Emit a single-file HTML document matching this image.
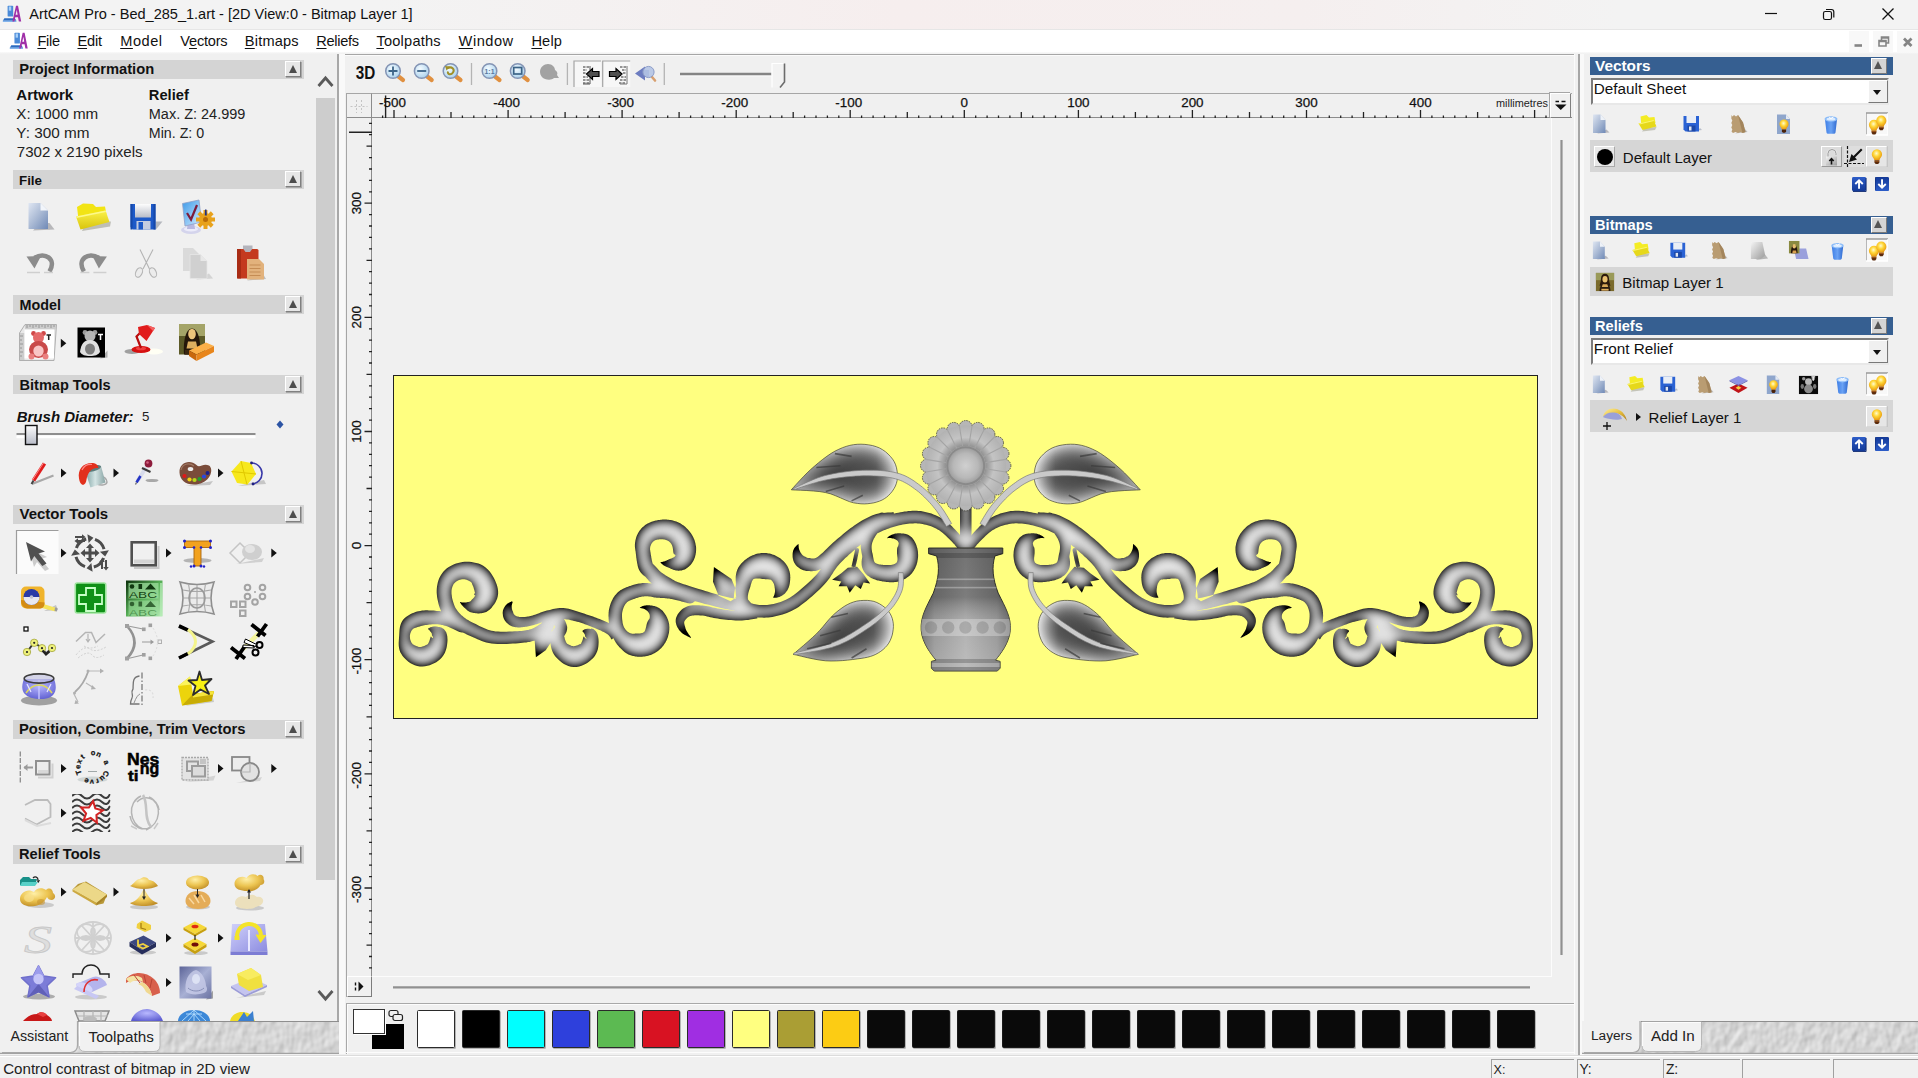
<!DOCTYPE html>
<html><head><meta charset="utf-8"><title>ArtCAM Pro</title>
<style>
html,body{margin:0;padding:0}
body{width:1918px;height:1078px;position:relative;overflow:hidden;background:#f0f0f0;font-family:"Liberation Sans",sans-serif;color:#1a1a1a}
.a{position:absolute}
.t{position:absolute;white-space:nowrap;line-height:1}
.hdr{position:absolute;left:13px;width:291px;height:19px;background:#d4d4d4}
.hdr b{position:absolute;left:5px;top:2px;font-size:15px;line-height:16px;letter-spacing:-0.2px;color:#111;transform-origin:0 50%}
.cb{position:absolute;width:14px;height:14px;background:#e6e6e6;border:1px solid;border-color:#fff #808080 #808080 #fff;box-shadow:1px 1px 0 #a8a8a8}
.cb:after{content:"";position:absolute;left:2.500px;top:2.500px;border:4.500px solid transparent;border-top:0;border-bottom:8.500px solid #4c4c4c}
.rh{position:absolute;left:1590px;width:303px;height:18px;background:#365f91}
.rh b{position:absolute;left:5px;top:1px;font-size:15px;line-height:16px;color:#fff;letter-spacing:-0.2px}
.row{position:absolute;left:1590px;width:303px;background:#d6d6d6}
.ic{position:absolute;width:32px;height:32px}
.arr{position:absolute;width:0;height:0;border:4px solid transparent;border-right:0;border-left:5px solid #111}
</style></head><body>
<svg width="0" height="0" style="position:absolute"><defs>
<linearGradient id="gPage" x1="0" y1="0" x2="1" y2="1"><stop offset="0" stop-color="#dfe6f2"/><stop offset=".5" stop-color="#a9b9d4"/><stop offset="1" stop-color="#6f89b6"/></linearGradient>
<radialGradient id="gBulb" cx=".45" cy=".38" r=".6"><stop offset="0" stop-color="#fffbd0"/><stop offset=".45" stop-color="#ffd83a"/><stop offset="1" stop-color="#e89a10"/></radialGradient>
<linearGradient id="gBin" x1="0" y1="0" x2="1" y2="0"><stop offset="0" stop-color="#3f7fe6"/><stop offset=".5" stop-color="#6aa2f4"/><stop offset="1" stop-color="#2f6ad0"/></linearGradient>
<linearGradient id="gGold" x1="0" y1="0" x2="1" y2="1"><stop offset="0" stop-color="#fff2a0"/><stop offset=".5" stop-color="#e8c040"/><stop offset="1" stop-color="#a87818"/></linearGradient>
<linearGradient id="gGrey" x1="0" y1="0" x2="1" y2="1"><stop offset="0" stop-color="#f4f4f4"/><stop offset="1" stop-color="#9a9a9a"/></linearGradient>
<linearGradient id="gBlueV" x1="0" y1="0" x2="0" y2="1"><stop offset="0" stop-color="#2c5cc8"/><stop offset="1" stop-color="#143a98"/></linearGradient>
<radialGradient id="gLens" cx=".4" cy=".35" r=".7"><stop offset="0" stop-color="#f4fbff"/><stop offset="1" stop-color="#a8d0ec"/></radialGradient>
<symbol id="s-new" viewBox="0 0 22 22"><path d="M7 20.500l12.500-1-3-3z" fill="#a9a9b0" opacity=".8"/><path d="M3 1.500h7.500l5 5.500V20H3z" fill="url(#gPage)"/><path d="M10.500 1.500V7h5z" fill="#eef2f8"/></symbol>
<symbol id="s-open" viewBox="0 0 22 22"><path d="M6 18.500l13-1.500 1.500-3-12 1z" fill="#b0b0a0" opacity=".7"/><path d="M4.500 3.500l6-1.500 2.500 2.500 5.500-.5 1 6-14 3z" fill="#f4ec24"/><path d="M2.500 10.500l15-3.500 3 6.500-14 3.500z" fill="#e6d81a"/><path d="M2.500 10.500l15-3.500.5 1-14.500 3.500z" fill="#fbf66a"/></symbol>
<symbol id="s-save" viewBox="0 0 22 22"><path d="M17 17.500l4-.5-2-2z" fill="#a0a8b8" opacity=".7"/><path d="M2.500 3h15.500v15.500H4.500l-2-2z" fill="#2a62d4"/><rect x="5.500" y="3" width="9.500" height="7" fill="#e9eef6"/><rect x="6.500" y="12.500" width="8" height="6" fill="#1c48a8"/><rect x="8" y="13.500" width="2.500" height="4" fill="#dfe6f2"/></symbol>
<symbol id="s-brown" viewBox="0 0 22 22"><path d="M8 20.500l12.500-1.500-2.500-3z" fill="#a8a8a8" opacity=".7"/><path d="M4.500 2l1 1.500L7 2l2 1.500L11 2l5 7.500 2.500 9.500-3 1-2-1-2.500 1-2.500-1L6 20l-1.500-1.500.8-2-1-2 1-2.500-1-2 1-2.500-1-2z" fill="#b99c72"/><path d="M11 2l5 7.500 2.500 9.500-3 1z" fill="#a3855c"/></symbol>
<symbol id="s-bulb" viewBox="0 0 22 22"><path d="M11 2.500a6 6 0 0 1 6 6c0 2.600-1.800 3.800-2.600 5.500l-.4 1.500H8l-.4-1.500C6.800 12.300 5 11.100 5 8.500a6 6 0 0 1 6-6z" fill="url(#gBulb)"/><path d="M8.200 15.500h5.600v2.500l-1.300 1.800h-3l-1.300-1.800z" fill="#5a2a0c"/><path d="M8.200 16.500h5.600" stroke="#c06a20" stroke-width=".8"/></symbol>
<symbol id="s-bulbdoc" viewBox="0 0 22 22"><path d="M4 1.500h9l4 4.500V21H4z" fill="#8fa6cc"/><path d="M13 1.500V6h4z" fill="#e4eaf4"/><path d="M11 6.500a4.600 4.600 0 0 1 4.600 4.600c0 2-1.400 3-2 4.200l-.3 1.200h-4.600l-.3-1.200c-.6-1.200-2-2.200-2-4.200A4.600 4.600 0 0 1 11 6.500z" fill="url(#gBulb)"/><path d="M8.900 16.500h4.200v2l-1 1.300h-2.200l-1-1.300z" fill="#4a220a"/></symbol>
<symbol id="s-trash" viewBox="0 0 22 22"><path d="M5 6.500h12l-1.500 13a1.500 1.500 0 0 1-1.500 1.200H8a1.500 1.500 0 0 1-1.500-1.200z" fill="url(#gBin)"/><ellipse cx="11" cy="6" rx="6.500" ry="2.800" fill="#8cbcf8"/><ellipse cx="11" cy="6" rx="4.500" ry="1.600" fill="#dcecff"/><path d="M9 4.500l2 1 2.500-1.500" stroke="#fff" stroke-width="1" fill="none"/></symbol>
<symbol id="s-bulbs" viewBox="0 0 24 24"><rect x="0" y="0" width="24" height="24" fill="#f8f8f8"/><path d="M0 24V0h24" fill="none" stroke="#9a9a9a" stroke-width="1.500"/><path d="M24 0v24H0" fill="none" stroke="#fff" stroke-width="1.500"/><g transform="translate(-1.500 5) scale(.85)"><use href="#s-bulb"/></g><g transform="translate(6.500 .5) scale(.85)"><use href="#s-bulb"/></g></symbol>
<symbol id="s-bulbbtn" viewBox="0 0 22 22"><rect x="0" y="0" width="22" height="22" fill="#e6e6e6"/><path d="M0 22V0h22" fill="none" stroke="#fff" stroke-width="2"/><path d="M22 0v22H0" fill="none" stroke="#b0b0b0" stroke-width="1.500"/><g transform="translate(1.500 1) scale(.88)"><use href="#s-bulb"/></g></symbol>
<symbol id="s-mona" viewBox="0 0 22 22"><rect x="1" y="1" width="20" height="20" fill="#7a6a2c"/><path d="M1 1h20v8H1z" fill="#9a9a58"/><path d="M5 21c0-5 2-8 6-8s6 3 6 8z" fill="#2a1c10"/><path d="M6.500 8c0-4 2-6 4.500-6s4.500 2 4.500 6c0 3 1 5 1.500 7h-12c.5-2 1.500-4 1.500-7z" fill="#2c1a0c"/><ellipse cx="11" cy="8" rx="2.800" ry="3.600" fill="#e8c070"/><path d="M8.500 13.500h5l1 3h-7z" fill="#d8a858"/><path d="M7 18.500h8v2H7z" fill="#e0b060"/></symbol>
<symbol id="s-updn" viewBox="0 0 16 16"><rect x="0" y="0" width="15" height="15" rx="1.500" fill="url(#gBlueV)"/><path d="M15 1v14.500H1" stroke="#0c2870" stroke-width="1" fill="none"/><path d="M7.500 12.500V4M3.500 7.500l4-4 4 4" stroke="#fff" stroke-width="2" fill="none"/></symbol>
<symbol id="s-greypage" viewBox="0 0 22 22"><path d="M8 21l13-1.500-3-4z" fill="#a8a8a8" opacity=".8"/><path d="M3 2h12l3 14-4.500 4H3z" fill="url(#gGrey)"/></symbol>
<symbol id="s-monasm" viewBox="0 0 22 22"><path d="M6 9h13l2.500 11h-13z" fill="#9aa0dc"/><rect x="1" y="1" width="11" height="13" fill="#8a8a40"/><path d="M3 14c0-4 1-9 3.500-9S10 10 10 14z" fill="#24140a"/><ellipse cx="6.500" cy="6.500" rx="1.800" ry="2.300" fill="#e8c070"/><path d="M5 11h3.500l.5 3H4.500z" fill="#d8a050"/></symbol>
<symbol id="s-merge" viewBox="0 0 22 22"><path d="M1.500 14.500L11 10l9.500 4.500L11 20z" fill="#c01418"/><path d="M11 12.500l3 2-3 2-3-2z" fill="#f8d040"/><path d="M1.500 6.500L11 2l9.500 4.500L11 11.500z" fill="#8c92e4"/><path d="M1.500 6.500L11 11.500v1L1.500 7.500zM20.500 6.500L11 11.500v1l9.500-5z" fill="#6468b8"/></symbol>
<symbol id="s-xray" viewBox="0 0 22 22"><rect x="1" y="2" width="20" height="19" fill="#0a0a0a"/><circle cx="11" cy="8" r="3.600" fill="#b8b8b8"/><ellipse cx="11" cy="15.500" rx="4.600" ry="4.600" fill="#8a8a8a"/><circle cx="6" cy="5" r="1.800" fill="#9a9a9a"/><circle cx="16" cy="5" r="1.800" fill="#9a9a9a"/><ellipse cx="4.500" cy="13" rx="1.800" ry="2.600" fill="#777"/><ellipse cx="17.500" cy="13" rx="1.800" ry="2.600" fill="#777"/><path d="M14 3h4" stroke="#eee" stroke-width="1.400"/><path d="M16 3v4" stroke="#eee" stroke-width="1.200"/></symbol>
</defs></svg>
<!-- title bar -->
<div class="a" style="left:0;top:0;width:1918px;height:29px;background:linear-gradient(90deg,#f3f3f3 0,#f3f3f3 380px,#f6eeee 900px,#f5efef 1300px,#f3f3f3 1620px)"></div>
<!-- menu bar -->
<div class="a" style="left:0;top:28.500px;width:1918px;height:1px;background:#e6e6e6;z-index:1"></div>
<div class="a" style="left:0;top:29px;width:1918px;height:23px;background:#fff"></div>
<div class="a" style="left:0;top:52px;width:1918px;height:2px;background:linear-gradient(#fafafa,#f0f0f0)"></div>
<!-- window controls -->
<svg class="a" style="left:1740px;top:0" width="178" height="29" viewBox="0 0 178 29">
 <path d="M25 13.5H37" stroke="#111" stroke-width="1.2" fill="none"/>
 <rect x="83.5" y="11.500" width="8" height="8" rx="1.8" fill="none" stroke="#111" stroke-width="1.2"/>
 <path d="M86 9.500h5.500a2.300 2.300 0 0 1 2.300 2.300V17.500" fill="none" stroke="#111" stroke-width="1.200"/>
 <path d="M142.500 8.500L153.500 19.500M153.500 8.500L142.500 19.500" stroke="#111" stroke-width="1.300" fill="none"/>
</svg>
<!-- mdi child controls -->
<div class="a" style="left:1849px;top:31px;width:20px;height:21px;background:#f8f8f8"></div>
<div class="a" style="left:1873px;top:31px;width:20px;height:21px;background:#f8f8f8"></div>
<div class="a" style="left:1897px;top:31px;width:21px;height:21px;background:#f8f8f8"></div>
<svg class="a" style="left:1849px;top:31px" width="69" height="21" viewBox="0 0 69 21">
 <path d="M5.500 14.500h7.500" stroke="#858585" stroke-width="2.600" fill="none"/>
 <path d="M30 9.500h7v5.500h-7zM30 10.500h7M32.500 9V6h7v6H37.500M32.500 7h7" stroke="#858585" stroke-width="1.600" fill="none"/>
 <path d="M55 7.500l7.500 7.500M62.500 7.500l-7.500 7.500" stroke="#858585" stroke-width="2.800" fill="none"/>
</svg>
<!-- status bar -->
<div class="a" style="left:0;top:1055px;width:1918px;height:1px;background:#dcdcdc"></div>
<div class="a" style="left:0;top:1056px;width:1918px;height:1px;background:#fff"></div>
<div class="a" style="left:1491px;top:1059px;width:82px;height:19px;border-left:1px solid #a0a0a0;border-top:1px solid #a0a0a0"></div>
<div class="a" style="left:1577px;top:1059px;width:82px;height:19px;border-left:1px solid #a0a0a0;border-top:1px solid #a0a0a0"></div>
<div class="a" style="left:1663px;top:1059px;width:76px;height:19px;border-left:1px solid #a0a0a0;border-top:1px solid #a0a0a0"></div>
<div class="a" style="left:1742px;top:1059px;width:87px;height:19px;border-left:1px solid #a0a0a0;border-top:1px solid #a0a0a0"></div>
<div class="a" style="left:1833px;top:1059px;width:85px;height:19px;border-left:1px solid #a0a0a0;border-top:1px solid #a0a0a0"></div>
<!-- left panel -->
<div class="hdr" style="top:60px"></div><div class="cb" style="left:285px;top:61px"></div>
<div class="hdr" style="top:170px"></div><div class="cb" style="left:285px;top:171px"></div>
<div class="hdr" style="top:295px"></div><div class="cb" style="left:285px;top:296px"></div>
<div class="hdr" style="top:375px"></div><div class="cb" style="left:285px;top:376px"></div>
<div class="hdr" style="top:505px"></div><div class="cb" style="left:285px;top:506px"></div>
<div class="hdr" style="top:720px"></div><div class="cb" style="left:285px;top:721px"></div>
<div class="hdr" style="top:845px"></div><div class="cb" style="left:285px;top:846px"></div>
<!-- scrollbar -->
<div class="a" style="left:316px;top:98px;width:19px;height:782px;background:#cdcdcd"></div>
<svg class="a" style="left:316px;top:70px" width="20" height="20" viewBox="0 0 20 20"><path d="M2.500 16l7-8 7 8" fill="none" stroke="#5a5a5a" stroke-width="2.800"/></svg>
<svg class="a" style="left:316px;top:985.500px" width="20" height="20" viewBox="0 0 20 20"><path d="M2.500 5l7 8 7-8" fill="none" stroke="#5a5a5a" stroke-width="2.800"/></svg>
<!-- splitter -->
<div class="a" style="left:337.200px;top:54px;width:2px;height:968px;background:#a8a8a8"></div>
<div class="a" style="left:339px;top:54px;width:5.500px;height:1000px;background:#f9f9f9"></div>
<!-- tabs bottom -->
<svg class="a" style="left:0;top:1021px" width="340" height="34" viewBox="0 1021 340 34">
<defs><filter id="fTex" x="0" y="0" width="100%" height="100%" color-interpolation-filters="sRGB"><feTurbulence type="fractalNoise" baseFrequency="0.11 0.08" numOctaves="2" seed="4" result="n"/><feDiffuseLighting in="n" surfaceScale="0.750" diffuseConstant="1" lighting-color="#fff" result="l"><feDistantLight azimuth="225" elevation="58"/></feDiffuseLighting><feColorMatrix in="l" type="matrix" values="1 0 0 0 -0.01  0 1 0 0 -0.01  0 0 1 0 -0.01  0 0 0 0 1"/></filter></defs>
<rect x="0" y="1021" width="339" height="32.500" fill="#d6d6d6"/>
<rect x="0" y="1021" width="339" height="32.500" filter="url(#fTex)"/>
<path d="M78 1021.500H339" stroke="#8e8e8e" stroke-width="1"/>
<path d="M0 1053.300H339" stroke="#a2a2a2" stroke-width="1.200"/>
<path d="M0 1021h77.500v24q0 7-7 7.500H0z" fill="#f0f0f0"/><path d="M77.500 1021v24q0 7-7 7.500H2" fill="none" stroke="#a8a8a8" stroke-width="1.200"/>
<path d="M79 1022h81v23.500q0 6-6 6H85q-6 0-6-6z" fill="#f1f1f1" stroke="#b8b8b8" stroke-width="1"/><path d="M79.500 1046v-23.500h80" fill="none" stroke="#fcfcfc" stroke-width="1.200"/>
</svg>
<div class="a" style="left:345px;top:54px;width:1229px;height:1px;background:#a6a6a6"></div>
<div class="a" style="left:345px;top:55px;width:1229px;height:1px;background:#fbfbfb"></div>
<div class="a" style="left:1574px;top:54px;width:1px;height:1000px;background:#fbfbfb"></div>
<div class="a" style="left:1578px;top:54px;width:2px;height:1001px;background:#a6a6a6"></div>
<div class="a" style="left:1580px;top:54px;width:3.500px;height:1001px;background:#f9f9f9"></div>
<div class="a" style="left:346px;top:93px;width:1226px;height:25px;border:1px solid #a6a6a6;border-right:0;border-bottom-color:#8c8c8c;box-sizing:border-box"></div>
<div class="a" style="left:346px;top:93px;width:26px;height:904px;border:1px solid #a6a6a6;border-right-color:#8c8c8c;box-sizing:border-box"></div>
<div class="a" style="left:1551px;top:118px;width:1px;height:858px;background:#fcfcfc"></div>
<div class="a" style="left:372px;top:976px;width:1180px;height:1px;background:#fcfcfc"></div>
<svg class="a" style="left:0;top:0" width="1918" height="1078" viewBox="0 0 1918 1078">
<path d="M382.6 115.5V118M394.0 110.0V118M405.4 115.5V118M416.8 115.5V118M428.2 115.5V118M439.6 115.5V118M451.0 112.0V118M462.4 115.5V118M473.8 115.5V118M485.2 115.5V118M496.7 115.5V118M508.1 110.0V118M519.5 115.5V118M530.9 115.5V118M542.3 115.5V118M553.7 115.5V118M565.1 112.0V118M576.5 115.5V118M587.9 115.5V118M599.3 115.5V118M610.7 115.5V118M622.1 110.0V118M633.5 115.5V118M644.9 115.5V118M656.3 115.5V118M667.7 115.5V118M679.1 112.0V118M690.6 115.5V118M702.0 115.5V118M713.4 115.5V118M724.8 115.5V118M736.2 110.0V118M747.6 115.5V118M759.0 115.5V118M770.4 115.5V118M781.8 115.5V118M793.2 112.0V118M804.6 115.5V118M816.0 115.5V118M827.4 115.5V118M838.8 115.5V118M850.2 110.0V118M861.6 115.5V118M873.1 115.5V118M884.5 115.5V118M895.9 115.5V118M907.3 112.0V118M918.7 115.5V118M930.1 115.5V118M941.5 115.5V118M952.9 115.5V118M964.3 110.0V118M975.7 115.5V118M987.1 115.5V118M998.5 115.5V118M1009.9 115.5V118M1021.3 112.0V118M1032.7 115.5V118M1044.1 115.5V118M1055.5 115.5V118M1067.0 115.5V118M1078.4 110.0V118M1089.8 115.5V118M1101.2 115.5V118M1112.6 115.5V118M1124.0 115.5V118M1135.4 112.0V118M1146.8 115.5V118M1158.2 115.5V118M1169.6 115.5V118M1181.0 115.5V118M1192.4 110.0V118M1203.8 115.5V118M1215.2 115.5V118M1226.6 115.5V118M1238.0 115.5V118M1249.5 112.0V118M1260.9 115.5V118M1272.3 115.5V118M1283.7 115.5V118M1295.1 115.5V118M1306.5 110.0V118M1317.9 115.5V118M1329.3 115.5V118M1340.7 115.5V118M1352.1 115.5V118M1363.5 112.0V118M1374.9 115.5V118M1386.3 115.5V118M1397.7 115.5V118M1409.1 115.5V118M1420.5 110.0V118M1431.9 115.5V118M1443.4 115.5V118M1454.8 115.5V118M1466.2 115.5V118M1477.6 112.0V118M1489.0 115.5V118M1500.4 115.5V118M1511.8 115.5V118M1523.2 115.5V118M1534.6 110.0V118M1546.0 115.5V118" stroke="#222" stroke-width="1.3" fill="none"/>
<path d="M369.0 967.9H372M369.0 956.5H372M366.5 945.1H372M369.0 933.6H372M369.0 922.2H372M369.0 910.8H372M369.0 899.4H372M364.5 888.0H372M369.0 876.6H372M369.0 865.2H372M369.0 853.8H372M369.0 842.3H372M366.5 830.9H372M369.0 819.5H372M369.0 808.1H372M369.0 796.7H372M369.0 785.3H372M364.5 773.9H372M369.0 762.4H372M369.0 751.0H372M369.0 739.6H372M369.0 728.2H372M366.5 716.8H372M369.0 705.4H372M369.0 694.0H372M369.0 682.6H372M369.0 671.1H372M364.5 659.7H372M369.0 648.3H372M369.0 636.9H372M369.0 625.5H372M369.0 614.1H372M366.5 602.7H372M369.0 591.3H372M369.0 579.8H372M369.0 568.4H372M369.0 557.0H372M364.5 545.6H372M369.0 534.2H372M369.0 522.8H372M369.0 511.4H372M369.0 499.9H372M366.5 488.5H372M369.0 477.1H372M369.0 465.7H372M369.0 454.3H372M369.0 442.9H372M364.5 431.5H372M369.0 420.1H372M369.0 408.6H372M369.0 397.2H372M369.0 385.8H372M366.5 374.4H372M369.0 363.0H372M369.0 351.6H372M369.0 340.2H372M369.0 328.8H372M364.5 317.3H372M369.0 305.9H372M369.0 294.5H372M369.0 283.1H372M369.0 271.7H372M366.5 260.3H372M369.0 248.9H372M369.0 237.4H372M369.0 226.0H372M369.0 214.6H372M364.5 203.2H372M369.0 191.8H372M369.0 180.4H372M369.0 169.0H372M369.0 157.6H372M366.5 146.1H372M369.0 134.7H372M369.0 123.3H372" stroke="#222" stroke-width="1.3" fill="none"/>
<path d="M385.6 95.500V118M349 132.200H372" stroke="#222" stroke-width="1.400" fill="none"/>
<path d="M350.500 106.500H367.500M356.500 100V113M361.500 100V113" stroke="#c4c4c4" stroke-width="1" stroke-dasharray="2 2" fill="none"/>
<text x="392.5" y="107.300" font-size="13.400" text-anchor="middle" fill="#111" stroke="#111" stroke-width=".25" font-family="Liberation Sans,sans-serif">-500</text>
<text x="506.6" y="107.300" font-size="13.400" text-anchor="middle" fill="#111" stroke="#111" stroke-width=".25" font-family="Liberation Sans,sans-serif">-400</text>
<text x="620.6" y="107.300" font-size="13.400" text-anchor="middle" fill="#111" stroke="#111" stroke-width=".25" font-family="Liberation Sans,sans-serif">-300</text>
<text x="734.7" y="107.300" font-size="13.400" text-anchor="middle" fill="#111" stroke="#111" stroke-width=".25" font-family="Liberation Sans,sans-serif">-200</text>
<text x="848.7" y="107.300" font-size="13.400" text-anchor="middle" fill="#111" stroke="#111" stroke-width=".25" font-family="Liberation Sans,sans-serif">-100</text>
<text x="964.3" y="107.300" font-size="13.400" text-anchor="middle" fill="#111" stroke="#111" stroke-width=".25" font-family="Liberation Sans,sans-serif">0</text>
<text x="1078.4" y="107.300" font-size="13.400" text-anchor="middle" fill="#111" stroke="#111" stroke-width=".25" font-family="Liberation Sans,sans-serif">100</text>
<text x="1192.4" y="107.300" font-size="13.400" text-anchor="middle" fill="#111" stroke="#111" stroke-width=".25" font-family="Liberation Sans,sans-serif">200</text>
<text x="1306.5" y="107.300" font-size="13.400" text-anchor="middle" fill="#111" stroke="#111" stroke-width=".25" font-family="Liberation Sans,sans-serif">300</text>
<text x="1420.5" y="107.300" font-size="13.400" text-anchor="middle" fill="#111" stroke="#111" stroke-width=".25" font-family="Liberation Sans,sans-serif">400</text>
<text transform="translate(360.600 889.5) rotate(-90)" font-size="13.400" text-anchor="middle" fill="#111" stroke="#111" stroke-width=".25" font-family="Liberation Sans,sans-serif">-300</text>
<text transform="translate(360.600 775.4) rotate(-90)" font-size="13.400" text-anchor="middle" fill="#111" stroke="#111" stroke-width=".25" font-family="Liberation Sans,sans-serif">-200</text>
<text transform="translate(360.600 661.2) rotate(-90)" font-size="13.400" text-anchor="middle" fill="#111" stroke="#111" stroke-width=".25" font-family="Liberation Sans,sans-serif">-100</text>
<text transform="translate(360.600 545.6) rotate(-90)" font-size="13.400" text-anchor="middle" fill="#111" stroke="#111" stroke-width=".25" font-family="Liberation Sans,sans-serif">0</text>
<text transform="translate(360.600 431.5) rotate(-90)" font-size="13.400" text-anchor="middle" fill="#111" stroke="#111" stroke-width=".25" font-family="Liberation Sans,sans-serif">100</text>
<text transform="translate(360.600 317.3) rotate(-90)" font-size="13.400" text-anchor="middle" fill="#111" stroke="#111" stroke-width=".25" font-family="Liberation Sans,sans-serif">200</text>
<text transform="translate(360.600 203.2) rotate(-90)" font-size="13.400" text-anchor="middle" fill="#111" stroke="#111" stroke-width=".25" font-family="Liberation Sans,sans-serif">300</text>
<text x="1496" y="106.800" font-size="10.2" fill="#222" font-family="Liberation Sans,sans-serif" textLength="52" lengthAdjust="spacingAndGlyphs">millimetres</text>
<path d="M393 987.300H1530" stroke="#909090" stroke-width="2.200" fill="none"/>
<path d="M1561.500 140V955" stroke="#909090" stroke-width="2.200" fill="none"/>
</svg>
<div class="a" style="left:1550px;top:93px;width:21px;height:25px;background:#f0f0f0;border:1px solid;border-color:#fff #808080 #808080 #fff;box-sizing:border-box;box-shadow:-1px -1px 0 #a6a6a6"></div>
<svg class="a" style="left:1550px;top:93px" width="22" height="25" viewBox="0 0 22 25"><path d="M5.500 8.500h3.500M11.500 8.500h4" stroke="#111" stroke-width="1.400"/><path d="M5 11.500h11.500l-5.750 5.500z" fill="#111"/></svg>
<div class="a" style="left:347px;top:975.500px;width:25px;height:21.500px;background:#f0f0f0;border:1.500px solid;border-color:#fff #7c7c7c #7c7c7c #fff;box-sizing:border-box"></div>
<svg class="a" style="left:347px;top:976.500px" width="25" height="19" viewBox="0 0 25 19"><path d="M8.500 5.500v3M8.500 10.500v3" stroke="#111" stroke-width="1.400"/><path d="M11.500 4.500v10l5-5z" fill="#111"/></svg>
<div class="a" style="left:393px;top:375px;width:1145px;height:344px;background:#ffff80;border:1.500px solid #222;box-sizing:border-box"></div>
<div class="a" style="left:346px;top:1002.500px;width:1228px;height:1px;background:#a8a8a8"></div>
<div class="a" style="left:346px;top:1003.500px;width:1228px;height:1px;background:#fcfcfc"></div>
<div class="a" style="left:346px;top:1002.500px;width:1px;height:51px;background:#a8a8a8"></div>
<div class="a" style="left:347px;top:1003.500px;width:1px;height:50px;background:#fcfcfc"></div>
<div class="a" style="left:346px;top:1052px;width:1228px;height:1px;background:#fcfcfc"></div>
<div class="a" style="left:372px;top:1024px;width:32px;height:25px;background:#000"></div>
<div class="a" style="left:353px;top:1009px;width:32px;height:25px;background:#fff;border:1px solid #333;box-sizing:border-box;box-shadow:1px 1px 0 #fff"></div>
<svg class="a" style="left:388px;top:1009px" width="18" height="14" viewBox="0 0 18 14"><rect x="1" y="1.500" width="9" height="6" rx="2" fill="none" stroke="#222" stroke-width="1.200"/><rect x="5" y="5.500" width="9.500" height="6" rx="2" fill="#f0f0f0" stroke="#222" stroke-width="1.200"/></svg>
<div class="a" style="left:417.3px;top:1010px;width:37.800px;height:37.600px;background:#ffffff;border:1.500px solid #2a2a2a;box-sizing:border-box;border-radius:1.500px;box-shadow:1px 1px 0 rgba(120,120,120,.5)"></div>
<div class="a" style="left:462.3px;top:1010px;width:37.800px;height:37.600px;background:#000000;border:1.500px solid #2a2a2a;box-sizing:border-box;border-radius:1.500px;box-shadow:1px 1px 0 rgba(120,120,120,.5)"></div>
<div class="a" style="left:507.3px;top:1010px;width:37.800px;height:37.600px;background:#00ffff;border:1.500px solid #2a2a2a;box-sizing:border-box;border-radius:1.500px;box-shadow:1px 1px 0 rgba(120,120,120,.5)"></div>
<div class="a" style="left:552.3px;top:1010px;width:37.800px;height:37.600px;background:#2e40dc;border:1.500px solid #2a2a2a;box-sizing:border-box;border-radius:1.500px;box-shadow:1px 1px 0 rgba(120,120,120,.5)"></div>
<div class="a" style="left:597.3px;top:1010px;width:37.800px;height:37.600px;background:#5cba52;border:1.500px solid #2a2a2a;box-sizing:border-box;border-radius:1.500px;box-shadow:1px 1px 0 rgba(120,120,120,.5)"></div>
<div class="a" style="left:642.2px;top:1010px;width:37.800px;height:37.600px;background:#d81222;border:1.500px solid #2a2a2a;box-sizing:border-box;border-radius:1.500px;box-shadow:1px 1px 0 rgba(120,120,120,.5)"></div>
<div class="a" style="left:687.2px;top:1010px;width:37.800px;height:37.600px;background:#a02ee2;border:1.500px solid #2a2a2a;box-sizing:border-box;border-radius:1.500px;box-shadow:1px 1px 0 rgba(120,120,120,.5)"></div>
<div class="a" style="left:732.2px;top:1010px;width:37.800px;height:37.600px;background:#ffff80;border:1.500px solid #2a2a2a;box-sizing:border-box;border-radius:1.500px;box-shadow:1px 1px 0 rgba(120,120,120,.5)"></div>
<div class="a" style="left:777.2px;top:1010px;width:37.800px;height:37.600px;background:#aa9e34;border:1.500px solid #2a2a2a;box-sizing:border-box;border-radius:1.500px;box-shadow:1px 1px 0 rgba(120,120,120,.5)"></div>
<div class="a" style="left:822.2px;top:1010px;width:37.800px;height:37.600px;background:#fccc14;border:1.500px solid #2a2a2a;box-sizing:border-box;border-radius:1.500px;box-shadow:1px 1px 0 rgba(120,120,120,.5)"></div>
<div class="a" style="left:867.2px;top:1010px;width:37.800px;height:37.600px;background:#0a0a0a;border:1.500px solid #1a1a1a;box-sizing:border-box;border-radius:1.500px;box-shadow:1px 1px 0 rgba(120,120,120,.5)"></div>
<div class="a" style="left:912.2px;top:1010px;width:37.800px;height:37.600px;background:#0a0a0a;border:1.500px solid #1a1a1a;box-sizing:border-box;border-radius:1.500px;box-shadow:1px 1px 0 rgba(120,120,120,.5)"></div>
<div class="a" style="left:957.2px;top:1010px;width:37.800px;height:37.600px;background:#0a0a0a;border:1.500px solid #1a1a1a;box-sizing:border-box;border-radius:1.500px;box-shadow:1px 1px 0 rgba(120,120,120,.5)"></div>
<div class="a" style="left:1002.2px;top:1010px;width:37.800px;height:37.600px;background:#0a0a0a;border:1.500px solid #1a1a1a;box-sizing:border-box;border-radius:1.500px;box-shadow:1px 1px 0 rgba(120,120,120,.5)"></div>
<div class="a" style="left:1047.2px;top:1010px;width:37.800px;height:37.600px;background:#0a0a0a;border:1.500px solid #1a1a1a;box-sizing:border-box;border-radius:1.500px;box-shadow:1px 1px 0 rgba(120,120,120,.5)"></div>
<div class="a" style="left:1092.2px;top:1010px;width:37.800px;height:37.600px;background:#0a0a0a;border:1.500px solid #1a1a1a;box-sizing:border-box;border-radius:1.500px;box-shadow:1px 1px 0 rgba(120,120,120,.5)"></div>
<div class="a" style="left:1137.1px;top:1010px;width:37.800px;height:37.600px;background:#0a0a0a;border:1.500px solid #1a1a1a;box-sizing:border-box;border-radius:1.500px;box-shadow:1px 1px 0 rgba(120,120,120,.5)"></div>
<div class="a" style="left:1182.1px;top:1010px;width:37.800px;height:37.600px;background:#0a0a0a;border:1.500px solid #1a1a1a;box-sizing:border-box;border-radius:1.500px;box-shadow:1px 1px 0 rgba(120,120,120,.5)"></div>
<div class="a" style="left:1227.1px;top:1010px;width:37.800px;height:37.600px;background:#0a0a0a;border:1.500px solid #1a1a1a;box-sizing:border-box;border-radius:1.500px;box-shadow:1px 1px 0 rgba(120,120,120,.5)"></div>
<div class="a" style="left:1272.1px;top:1010px;width:37.800px;height:37.600px;background:#0a0a0a;border:1.500px solid #1a1a1a;box-sizing:border-box;border-radius:1.500px;box-shadow:1px 1px 0 rgba(120,120,120,.5)"></div>
<div class="a" style="left:1317.1px;top:1010px;width:37.800px;height:37.600px;background:#0a0a0a;border:1.500px solid #1a1a1a;box-sizing:border-box;border-radius:1.500px;box-shadow:1px 1px 0 rgba(120,120,120,.5)"></div>
<div class="a" style="left:1362.1px;top:1010px;width:37.800px;height:37.600px;background:#0a0a0a;border:1.500px solid #1a1a1a;box-sizing:border-box;border-radius:1.500px;box-shadow:1px 1px 0 rgba(120,120,120,.5)"></div>
<div class="a" style="left:1407.1px;top:1010px;width:37.800px;height:37.600px;background:#0a0a0a;border:1.500px solid #1a1a1a;box-sizing:border-box;border-radius:1.500px;box-shadow:1px 1px 0 rgba(120,120,120,.5)"></div>
<div class="a" style="left:1452.1px;top:1010px;width:37.800px;height:37.600px;background:#0a0a0a;border:1.500px solid #1a1a1a;box-sizing:border-box;border-radius:1.500px;box-shadow:1px 1px 0 rgba(120,120,120,.5)"></div>
<div class="a" style="left:1497.1px;top:1010px;width:37.800px;height:37.600px;background:#0a0a0a;border:1.500px solid #1a1a1a;box-sizing:border-box;border-radius:1.500px;box-shadow:1px 1px 0 rgba(120,120,120,.5)"></div>
<svg class="a" style="left:0;top:0" width="1918" height="1078" viewBox="0 0 1918 1078">
<defs>
<filter id="fRel" x="-5%" y="-5%" width="110%" height="110%" color-interpolation-filters="sRGB"><feGaussianBlur in="SourceAlpha" stdDeviation="6" result="b"/><feColorMatrix in="b" type="matrix" values="0 0 0 1.34 -0.44  0 0 0 1.34 -0.44  0 0 0 1.34 -0.44  0 0 0 0 1" result="g"/><feComposite in="g" in2="SourceAlpha" operator="in"/></filter>
<filter id="fLeaf" x="-5%" y="-5%" width="110%" height="110%" color-interpolation-filters="sRGB"><feGaussianBlur in="SourceAlpha" stdDeviation="10" result="b"/><feColorMatrix in="b" type="matrix" values="0 0 0 -1.0 1.28  0 0 0 -1.0 1.28  0 0 0 -1.0 1.28  0 0 0 0 1" result="g"/><feComposite in="g" in2="SourceAlpha" operator="in"/></filter>
<linearGradient id="gVase" x1="0" y1="0" x2="1" y2="0"><stop offset="0" stop-color="#585858"/><stop offset=".15" stop-color="#868686"/><stop offset=".5" stop-color="#a4a4a4"/><stop offset=".85" stop-color="#868686"/><stop offset="1" stop-color="#585858"/></linearGradient>
<linearGradient id="gVaseV" x1="0" y1="0" x2="0" y2="1"><stop offset="0" stop-color="#000" stop-opacity=".3"/><stop offset=".4" stop-color="#000" stop-opacity=".24"/><stop offset=".6" stop-color="#fff" stop-opacity=".14"/><stop offset="1" stop-color="#fff" stop-opacity=".3"/></linearGradient>
<radialGradient id="gFlower"><stop offset="0" stop-color="#c8c8c8"/><stop offset=".46" stop-color="#b4b4b4"/><stop offset=".5" stop-color="#949494"/><stop offset=".7" stop-color="#c4c4c4"/><stop offset="1" stop-color="#b2b2b2"/></radialGradient>
<radialGradient id="gFc"><stop offset="0" stop-color="#d0d0d0"/><stop offset=".7" stop-color="#b8b8b8"/><stop offset="1" stop-color="#a0a0a0"/></radialGradient>
<clipPath id="cArt"><rect x="395" y="377" width="1141" height="340"/></clipPath>
</defs>
<g clip-path="url(#cArt)">
<g filter="url(#fRel)" fill="#000"><g id="halfS"><path d="M464.7 620.1L463.8 619.7L462.7 619.2L461.3 618.5L459.7 617.8L457.9 617.0L456.1 616.2L454.3 615.4L452.5 614.6L450.7 613.9L449.0 613.3L447.5 612.8L446.1 612.4L444.7 612.1L443.4 611.8L442.0 611.5L440.7 611.3L439.4 611.1L438.0 611.0L436.7 610.9L435.3 610.8L433.8 610.6L432.3 610.5L430.7 610.4L429.0 610.4L427.3 610.3L425.6 610.3L423.9 610.4L422.1 610.6L420.3 610.9L418.6 611.2L417.1 611.6L415.5 612.1L413.9 612.7L412.3 613.3L410.7 614.0L409.1 614.9L407.5 615.9L406.0 617.0L404.5 618.3L403.1 619.8L402.0 621.5L401.1 623.2L400.5 625.0L400.0 626.7L399.7 628.4L399.5 630.1L399.4 631.7L399.3 633.3L399.2 634.9L399.1 636.3L399.0 637.8L398.9 639.4L398.8 641.0L398.7 642.7L398.7 644.5L398.8 646.3L399.1 648.2L399.6 650.2L400.3 652.2L401.4 654.1L402.6 655.9L403.9 657.5L405.4 659.1L407.0 660.5L408.7 661.9L410.6 663.2L412.6 664.3L414.8 665.3L417.2 666.0L419.9 666.5L422.5 666.5L425.0 666.3L427.4 665.8L429.7 665.2L431.9 664.3L434.1 663.3L436.2 662.2L438.2 660.8L440.1 659.3L442.0 657.3L443.6 655.0L444.9 652.7L445.8 650.3L446.5 648.1L446.9 645.9L447.2 643.8L447.4 641.8L447.5 640.0L447.4 638.3L447.3 636.5L446.9 634.5L446.2 632.3L445.0 630.5L443.8 629.1L442.5 628.2L441.3 627.5L440.3 627.2L439.5 627.0L439.0 627.0L438.5 627.0L437.7 626.8L436.7 626.5L435.8 626.4L435.0 626.3L434.2 626.4L433.6 626.5L432.9 626.6L432.4 626.7L431.9 626.9L431.5 627.0L430.9 627.1L430.4 627.3L430.0 627.5L429.6 627.7L429.2 627.9L428.9 628.1L428.6 628.2L428.4 628.4L428.2 628.5L428.0 628.6L428.0 629.1L428.2 629.3L428.4 629.4L428.6 629.6L428.8 629.8L429.1 630.0L429.4 630.2L429.6 630.5L429.8 630.7L430.0 631.0L430.2 631.4L430.5 631.7L430.9 632.1L431.2 632.5L431.4 632.9L431.7 633.3L431.8 633.7L431.9 634.1L431.9 634.4L431.9 634.8L431.9 635.2L432.3 635.9L432.7 636.6L433.0 637.2L433.1 637.6L432.9 637.9L432.6 637.9L432.1 637.7L431.6 637.3L431.2 636.7L430.9 636.5L430.6 637.0L430.3 637.9L430.0 639.0L429.6 640.2L429.2 641.4L428.7 642.5L428.2 643.4L427.8 644.0L427.6 644.3L427.5 644.3L427.3 644.4L426.8 644.7L426.0 645.1L425.2 645.5L424.3 645.9L423.3 646.3L422.4 646.6L421.7 646.8L421.1 646.9L420.9 647.0L420.8 647.1L420.3 647.1L419.6 647.1L418.7 646.9L417.8 646.6L416.8 646.2L415.8 645.8L414.9 645.4L414.2 644.9L413.6 644.7L413.2 644.5L412.7 644.2L412.2 643.6L411.7 642.9L411.2 642.1L410.8 641.1L410.4 640.0L410.1 638.9L410.0 637.8L409.9 636.7L409.9 635.6L410.1 634.5L410.3 633.4L410.7 632.4L411.1 631.5L411.5 630.7L412.0 630.0L412.5 629.4L412.9 629.0L413.3 628.8L413.6 628.6L414.1 628.3L414.8 628.0L415.6 627.7L416.5 627.4L417.5 627.0L418.7 626.7L419.8 626.4L421.0 626.1L422.2 625.8L423.2 625.5L424.3 625.3L425.5 625.1L426.8 624.9L428.1 624.7L429.4 624.5L430.8 624.4L432.1 624.3L433.5 624.3L434.7 624.2L435.9 624.3L437.0 624.3L438.0 624.3L439.0 624.4L439.9 624.5L440.9 624.7L441.8 624.9L442.8 625.1L443.9 625.4L445.0 625.7L446.2 626.1L447.6 626.6L449.2 627.3L450.9 628.0L452.6 628.8L454.2 629.5L455.8 630.3L457.2 630.9L458.4 631.5L459.3 631.9ZM455.5 626.0a6.5 6.5 0 1 0 13.0 0a6.5 6.5 0 1 0 -13.0 0ZM544.7 621.0L543.9 621.5L542.8 622.2L541.7 623.0L540.4 623.9L539.1 624.8L537.7 625.7L536.4 626.6L535.1 627.3L533.8 628.0L532.7 628.4L531.6 628.9L530.5 629.3L529.4 629.6L528.4 629.9L527.2 630.1L526.0 630.3L524.7 630.5L523.2 630.7L521.5 630.9L519.5 631.0L517.3 631.2L514.8 631.3L512.1 631.5L509.2 631.6L506.4 631.7L503.5 631.7L500.6 631.7L498.0 631.6L495.5 631.4L493.4 631.1L491.5 630.7L489.7 630.3L487.9 629.7L486.2 629.1L484.4 628.3L482.7 627.6L481.0 626.7L479.3 625.9L477.5 625.0L475.7 624.1L474.0 623.3L472.4 622.5L470.9 621.7L469.5 620.9L468.1 620.1L466.8 619.4L465.6 618.6L464.5 617.8L463.5 617.0L462.5 616.1L461.4 615.2L460.5 614.2L459.5 613.3L458.6 612.3L457.8 611.3L457.1 610.3L456.4 609.3L455.7 608.2L455.1 607.2L454.6 606.0L454.1 604.7L453.6 603.3L453.1 601.7L452.6 600.1L452.2 598.4L451.9 596.8L451.7 595.1L451.5 593.6L451.5 592.3L451.5 591.1L451.6 589.9L451.8 588.8L452.1 587.8L452.4 586.7L452.8 585.8L453.2 584.9L453.6 584.1L454.1 583.5L454.6 582.9L455.1 582.4L455.6 582.0L456.3 581.5L457.1 581.0L458.0 580.5L459.0 580.1L460.0 579.7L461.0 579.4L462.0 579.2L462.9 579.2L463.6 579.2L464.5 579.3L465.5 579.5L466.6 579.8L467.7 580.2L468.8 580.7L469.7 581.2L470.6 581.7L471.2 582.3L471.6 582.8L471.8 583.0L471.9 583.3L472.1 584.0L472.5 584.9L473.0 586.0L473.5 587.3L473.9 588.7L474.3 590.0L474.6 591.2L474.8 592.3L474.9 592.8L474.9 592.7L474.9 592.3L474.9 592.0L475.0 591.9L475.1 591.9L475.1 592.2L474.9 592.7L474.7 593.3L474.3 594.2L474.0 595.0L473.9 595.3L474.1 595.3L474.3 595.2L474.6 595.0L474.9 595.0L475.2 594.9L475.3 595.0L475.3 595.2L475.1 595.6L474.9 595.9L474.8 596.2L474.6 596.6L474.4 597.0L474.0 597.5L473.5 598.0L473.1 598.4L472.6 598.9L472.2 599.3L471.8 599.7L471.5 600.0L471.3 600.3L471.2 600.6L471.0 600.9L470.8 601.1L470.4 601.3L470.1 601.5L469.6 601.7L469.1 601.8L468.6 601.9L468.0 602.0L467.6 602.1L467.1 602.2L466.7 602.3L466.3 602.4L465.9 602.5L465.5 602.5L465.1 602.5L464.7 602.6L464.3 602.6L463.9 602.6L463.5 602.6L463.1 602.6L462.6 602.5L462.2 602.4L461.8 602.4L461.4 602.3L461.0 602.2L460.7 602.1L460.4 602.1L460.1 602.0L460.0 602.3L460.1 602.5L460.3 602.7L460.4 603.0L460.6 603.3L460.9 603.7L461.1 604.1L461.4 604.5L461.7 604.9L462.0 605.2L462.3 605.6L462.7 606.0L463.0 606.3L463.3 606.7L463.7 607.0L464.0 607.4L464.4 607.7L464.8 608.1L465.2 608.4L465.7 608.8L466.1 609.2L466.5 609.5L466.8 609.9L467.2 610.2L467.7 610.7L468.3 611.1L469.0 611.5L469.8 611.9L470.7 612.2L471.7 612.5L472.7 612.8L473.7 612.9L474.7 613.1L475.7 613.2L476.8 613.3L477.9 613.4L479.0 613.4L480.1 613.3L481.3 613.2L482.4 613.0L483.5 612.7L484.4 612.5L485.3 612.2L486.3 611.9L487.3 611.3L488.4 610.6L489.5 609.8L490.6 608.8L491.6 607.7L492.4 606.6L493.1 605.7L493.5 605.1L494.1 604.4L494.7 603.5L495.5 602.2L496.3 600.6L497.1 598.8L497.7 596.6L498.1 594.1L498.1 591.4L497.8 588.8L497.3 586.6L496.7 584.6L495.9 582.4L495.0 580.3L493.9 578.1L492.7 575.9L491.3 573.7L489.7 571.5L487.8 569.4L485.6 567.4L483.2 565.8L480.9 564.5L478.5 563.6L476.1 562.9L473.8 562.4L471.5 562.0L469.2 561.8L466.9 561.8L464.7 561.8L462.6 562.0L460.3 562.4L458.2 562.9L456.1 563.5L454.1 564.3L452.1 565.2L450.2 566.2L448.4 567.3L446.6 568.6L445.0 570.0L443.5 571.5L442.2 573.2L441.0 574.9L440.0 576.7L439.1 578.6L438.4 580.5L437.8 582.5L437.4 584.4L437.0 586.4L436.8 588.5L436.7 590.5L436.7 592.7L436.9 594.9L437.1 597.1L437.5 599.3L438.0 601.5L438.5 603.8L439.1 605.9L439.8 608.0L440.6 610.1L441.4 612.0L442.3 613.8L443.3 615.6L444.4 617.3L445.6 618.9L446.8 620.4L448.1 621.8L449.4 623.2L450.7 624.5L452.1 625.7L453.5 626.9L455.1 628.1L456.7 629.2L458.3 630.2L460.0 631.1L461.7 632.0L463.4 632.8L465.1 633.6L466.8 634.4L468.5 635.2L470.3 635.9L472.0 636.7L473.7 637.5L475.5 638.3L477.5 639.2L479.5 640.1L481.7 640.9L483.9 641.7L486.3 642.4L488.9 643.0L491.6 643.5L494.4 643.8L497.4 644.0L500.5 644.0L503.6 644.0L506.7 643.9L509.8 643.8L512.8 643.6L515.6 643.4L518.2 643.2L520.5 643.0L522.6 642.8L524.5 642.6L526.3 642.4L528.0 642.1L529.6 641.9L531.1 641.5L532.7 641.1L534.2 640.7L535.7 640.2L537.3 639.6L539.0 638.8L540.8 637.9L542.5 636.9L544.2 635.8L545.8 634.8L547.2 633.8L548.6 632.9L549.7 632.1L550.6 631.5L551.3 631.0ZM542.0 626.0a6.0 6.0 0 1 0 12.0 0a6.0 6.0 0 1 0 -12.0 0ZM511.9 601.3L511.6 601.4L511.2 601.6L510.7 601.9L510.1 602.1L509.5 602.4L508.8 602.8L508.2 603.2L507.5 603.6L506.9 604.1L506.3 604.7L505.8 605.3L505.3 605.8L504.9 606.4L504.5 607.0L504.1 607.7L503.7 608.4L503.4 609.2L503.1 610.0L502.9 610.8L502.8 611.7L502.7 612.5L502.7 613.3L502.8 614.1L502.9 615.0L503.0 615.9L503.2 616.8L503.5 617.8L503.9 618.8L504.4 619.7L505.0 620.7L505.6 621.5L506.2 622.2L506.9 622.9L507.6 623.6L508.4 624.3L509.3 624.9L510.2 625.5L511.2 626.0L512.3 626.4L513.4 626.8L514.5 627.0L515.6 627.2L516.8 627.3L517.9 627.4L519.0 627.4L520.1 627.4L521.2 627.3L522.3 627.2L523.3 627.1L524.4 627.0L525.5 626.8L526.5 626.7L527.6 626.5L528.6 626.3L529.7 626.0L530.7 625.8L531.8 625.5L532.9 625.2L534.0 624.9L535.3 624.6L536.6 624.2L538.0 623.7L539.5 623.3L540.9 622.8L542.3 622.3L543.7 621.8L545.1 621.4L546.5 621.0L547.8 620.7L549.1 620.4L550.5 620.1L552.0 619.8L553.4 619.6L554.8 619.4L556.2 619.2L557.6 619.1L558.9 619.0L560.2 619.0L561.5 619.0L562.7 619.0L564.0 619.1L565.2 619.2L566.6 619.4L568.0 619.6L569.4 619.8L570.9 620.2L572.4 620.5L574.0 620.9L575.5 621.3L577.1 621.7L578.7 622.1L580.2 622.6L581.7 623.1L583.3 623.6L584.8 624.2L586.4 624.7L587.9 625.3L589.5 625.9L591.0 626.5L592.6 627.2L594.2 627.8L595.8 628.5L597.5 629.2L599.2 629.9L600.8 630.6L602.3 631.4L603.8 632.1L605.1 632.7L606.3 633.4L607.2 633.9L607.8 634.4L608.4 634.9L608.9 635.4L609.3 635.9L609.7 636.5L610.1 637.0L610.5 637.6L610.8 638.2L611.3 638.9L611.7 639.5L620.3 632.5L620.1 632.3L619.8 632.0L619.4 631.5L618.9 630.7L618.2 629.9L617.5 629.0L616.5 628.0L615.4 627.0L614.2 626.0L612.8 625.1L611.4 624.2L609.9 623.5L608.3 622.7L606.6 622.0L604.9 621.2L603.1 620.5L601.3 619.8L599.6 619.1L597.9 618.5L596.2 617.8L594.6 617.2L593.0 616.6L591.3 616.0L589.7 615.5L588.1 614.9L586.4 614.4L584.8 613.8L583.1 613.3L581.5 612.8L579.9 612.3L578.3 611.8L576.8 611.3L575.2 610.8L573.6 610.2L572.0 609.7L570.3 609.2L568.6 608.8L566.9 608.4L565.1 608.2L563.3 608.0L561.5 608.0L559.7 608.0L557.9 608.2L556.2 608.5L554.6 608.8L553.0 609.1L551.4 609.5L549.9 609.9L548.4 610.2L546.9 610.6L545.3 611.1L543.7 611.6L542.1 612.1L540.6 612.6L539.1 613.2L537.6 613.7L536.3 614.2L535.0 614.7L533.8 615.1L532.7 615.4L531.6 615.7L530.6 616.0L529.5 616.2L528.6 616.4L527.7 616.6L526.9 616.7L526.0 616.8L525.2 616.9L524.4 617.0L523.6 617.0L522.7 617.0L521.9 617.0L521.0 617.0L520.2 616.9L519.4 616.9L518.7 616.8L518.0 616.6L517.5 616.5L517.0 616.4L516.6 616.2L516.3 616.1L516.0 616.0L515.7 615.8L515.4 615.6L515.1 615.4L514.9 615.2L514.6 615.0L514.4 614.7L514.2 614.5L514.0 614.3L513.9 614.2L513.8 614.1L513.7 613.9L513.6 613.6L513.4 613.3L513.3 612.9L513.2 612.5L513.1 612.1L512.9 611.7L512.8 611.3L512.7 611.0L512.5 610.7L512.4 610.4L512.2 610.0L512.1 609.6L512.0 609.1L511.9 608.7L511.8 608.2L511.8 607.7L511.7 607.3L511.7 606.9L511.7 606.3L511.7 605.8L511.8 605.1L512.0 604.5L512.1 603.9L512.3 603.3L512.5 602.7L512.6 602.3L512.7 601.9ZM542 622a6 6 0 1 0 12 0a6 6 0 1 0 -12 0ZM534.3 635.0L535.9 657.3L545.7 650.3L551.2 642.0L551.7 630.8L542.0 630.0ZM551.2 619.6L551.5 620.4L552.0 621.3L552.6 622.3L553.1 623.4L553.7 624.5L554.2 625.5L554.6 626.5L554.9 627.3L554.9 627.8L554.9 627.8L554.8 627.4L554.8 627.1L554.7 627.2L554.4 627.6L553.9 628.3L553.2 629.2L552.4 630.5L551.5 632.1L550.8 634.1L550.5 636.3L550.4 638.0L550.4 639.6L550.4 641.3L550.5 643.0L550.7 644.9L551.0 646.8L551.5 648.8L552.1 650.8L553.1 652.9L554.3 654.9L555.6 656.7L557.1 658.3L558.6 659.8L560.3 661.3L562.1 662.7L564.0 663.9L566.1 665.0L568.4 666.0L571.0 666.7L573.8 667.0L576.6 666.9L579.2 666.4L581.5 665.7L583.8 664.8L585.9 663.7L587.9 662.4L589.8 661.1L591.5 659.6L593.2 657.9L594.8 655.9L596.2 653.6L597.2 651.2L597.9 648.9L598.3 646.7L598.5 644.6L598.6 642.7L598.6 640.9L598.5 639.3L598.3 637.8L598.1 636.5L597.7 634.7L597.0 632.9L595.9 631.2L594.6 629.9L593.3 629.1L592.2 628.7L591.4 628.6L590.9 628.7L590.8 628.9L590.7 629.1L590.2 629.0L589.5 628.8L588.9 628.7L588.3 628.7L587.8 628.7L587.2 628.7L586.8 628.8L586.4 628.9L586.0 629.0L585.6 629.1L585.2 629.2L584.7 629.3L584.3 629.5L584.0 629.7L583.6 629.9L583.4 630.1L583.1 630.3L582.9 630.5L582.7 630.6L582.6 630.7L582.5 631.5L582.7 631.7L582.9 631.8L583.1 632.0L583.3 632.2L583.5 632.4L583.7 632.7L583.9 632.9L584.1 633.2L584.2 633.4L584.3 633.7L584.5 634.0L584.6 634.2L584.8 634.5L584.9 634.8L585.0 635.1L585.0 635.3L585.0 635.6L585.0 635.8L584.9 636.1L585.1 636.5L585.6 637.2L586.2 637.8L586.5 638.2L586.6 638.5L586.3 638.7L585.7 638.5L585.0 638.0L584.4 637.3L584.0 636.7L583.7 636.5L583.4 637.1L583.1 638.1L582.8 639.2L582.4 640.4L582.0 641.5L581.5 642.5L581.1 643.4L580.6 644.0L580.3 644.2L580.2 644.1L579.9 644.1L579.3 644.4L578.6 644.8L577.7 645.2L576.8 645.5L575.9 645.8L575.1 646.0L574.5 646.1L574.2 646.2L574.2 646.2L574.3 646.3L574.0 646.3L573.4 646.3L572.6 646.1L571.7 645.9L570.8 645.5L569.8 645.1L569.0 644.7L568.2 644.3L567.7 644.0L567.4 643.9L567.0 643.5L566.6 643.0L566.1 642.2L565.7 641.3L565.3 640.3L564.9 639.3L564.7 638.3L564.5 637.3L564.3 636.7L564.2 636.7L564.1 636.8L564.1 636.6L564.3 636.1L564.7 635.3L565.3 634.3L566.0 633.0L566.6 631.4L567.1 629.3L567.2 627.0L566.7 624.9L566.1 623.2L565.4 621.6L564.6 620.1L563.8 618.8L563.0 617.6L562.2 616.5L561.6 615.5L561.1 614.9L560.8 614.4ZM550.5 617.0a5.5 5.5 0 1 0 11.0 0a5.5 5.5 0 1 0 -11.0 0ZM691.7 590.7L691.2 590.6L690.5 590.4L689.7 590.2L688.9 590.0L688.0 589.7L687.0 589.4L685.9 589.2L684.8 588.9L683.7 588.6L682.5 588.2L681.3 587.9L680.1 587.6L678.9 587.3L677.7 587.0L676.5 586.8L675.4 586.5L674.2 586.3L673.1 586.1L672.0 585.9L670.9 585.8L669.8 585.6L668.6 585.5L667.5 585.4L666.4 585.3L665.3 585.2L664.2 585.1L663.2 585.0L662.1 585.0L661.1 584.9L660.2 584.9L659.4 584.8L658.5 584.8L657.8 584.7L657.1 584.7L656.8 584.7L656.9 584.7L656.9 584.7L656.4 584.5L655.5 584.3L654.5 584.0L653.5 583.8L652.4 583.6L651.3 583.4L650.2 583.3L648.9 583.2L647.7 583.1L646.5 583.0L645.2 583.0L643.9 583.1L642.6 583.1L641.4 583.3L640.1 583.4L639.0 583.6L637.8 583.8L636.7 584.0L635.7 584.3L634.7 584.5L633.8 584.8L632.9 585.1L632.2 585.3L631.5 585.5L630.9 585.7L630.3 585.9L629.7 586.1L629.1 586.3L628.6 586.5L628.0 586.7L627.5 586.9L627.0 587.1L626.5 587.3L625.9 587.5L625.4 587.7L624.8 587.9L624.3 588.2L623.7 588.5L623.2 588.7L622.6 589.0L622.0 589.4L621.4 589.7L620.7 590.1L620.1 590.6L619.5 591.0L618.8 591.5L618.2 592.1L617.6 592.6L617.0 593.2L616.5 593.8L615.9 594.4L615.4 595.0L614.9 595.6L614.4 596.3L614.0 597.0L613.5 597.6L613.1 598.3L612.7 599.0L612.4 599.7L612.0 600.4L611.7 601.1L611.4 601.8L611.1 602.5L610.8 603.1L610.6 603.8L610.4 604.5L610.1 605.1L610.0 605.7L609.8 606.3L609.6 606.9L609.5 607.6L609.3 608.2L609.2 608.8L609.0 609.4L608.9 610.1L608.8 610.7L608.8 611.3L608.7 611.9L608.6 612.5L608.6 613.1L608.6 613.7L608.6 614.2L608.5 614.8L608.5 615.3L608.5 615.9L608.5 616.4L608.6 616.9L608.6 617.4L608.6 617.9L608.6 618.4L608.6 618.9L608.7 619.4L608.7 619.9L608.7 620.4L608.8 620.9L608.8 621.4L608.9 621.9L608.9 622.4L609.0 622.9L609.0 623.5L609.1 624.0L609.2 624.6L609.3 625.2L609.4 625.7L609.5 626.3L609.6 626.9L609.7 627.5L609.9 628.1L610.0 628.6L610.2 629.2L610.3 629.8L610.5 630.4L610.7 631.0L610.9 631.6L611.1 632.2L611.3 632.8L611.5 633.4L611.7 634.0L611.9 634.5L612.1 635.1L612.4 635.6L612.6 636.1L612.8 636.7L613.0 637.2L613.3 637.8L613.6 638.4L613.8 638.9L614.1 639.5L614.4 640.1L614.7 640.7L615.1 641.3L615.4 641.9L615.8 642.4L616.1 643.0L616.5 643.6L616.9 644.2L617.4 644.7L617.8 645.3L618.2 645.8L618.7 646.3L619.2 646.9L619.7 647.4L620.1 647.8L620.6 648.3L621.0 648.7L621.4 649.1L621.8 649.4L622.2 649.8L622.5 650.2L622.9 650.5L623.3 650.9L623.7 651.2L624.0 651.5L624.4 651.9L624.9 652.2L625.3 652.5L625.8 652.9L626.3 653.2L626.8 653.5L627.3 653.8L627.9 654.2L628.5 654.5L629.2 654.7L629.9 655.0L630.7 655.3L631.4 655.5L632.2 655.8L633.0 655.9L633.8 656.1L634.6 656.3L635.5 656.4L636.5 656.6L637.5 656.7L638.6 656.7L639.6 656.8L640.8 656.8L642.0 656.7L643.2 656.6L644.4 656.5L645.6 656.3L646.9 656.0L648.2 655.7L649.4 655.3L650.7 654.9L651.9 654.4L653.2 653.8L654.4 653.2L655.6 652.5L656.8 651.8L657.9 651.0L659.1 650.1L660.1 649.1L661.1 648.2L662.1 647.1L663.0 646.1L663.8 645.0L664.5 643.8L665.3 642.7L665.9 641.5L666.5 640.4L667.0 639.2L667.5 638.0L667.9 636.9L668.2 635.7L668.5 634.6L668.8 633.5L669.0 632.4L669.1 631.4L669.2 630.4L669.3 629.4L669.3 628.5L669.4 627.6L669.3 626.8L669.3 626.1L669.2 625.4L669.2 624.7L669.1 624.0L669.0 623.3L668.8 622.7L668.7 622.0L668.5 621.4L668.3 620.8L668.1 620.2L667.9 619.6L667.7 619.0L667.4 618.4L667.2 617.8L666.9 617.3L666.6 616.7L666.3 616.1L666.0 615.6L665.7 615.0L665.3 614.4L664.9 613.9L664.5 613.3L664.1 612.7L663.7 612.2L663.3 611.7L662.8 611.1L662.3 610.6L661.9 610.2L661.4 609.8L660.9 609.4L660.4 609.0L659.9 608.7L659.5 608.3L659.0 608.0L658.5 607.7L658.0 607.5L657.5 607.2L657.0 607.0L656.5 606.8L656.0 606.6L655.5 606.4L655.0 606.3L654.5 606.1L654.0 606.0L653.5 605.9L653.0 605.8L652.5 605.7L652.0 605.6L651.5 605.5L651.0 605.4L650.4 605.4L649.9 605.3L649.3 605.2L648.7 605.2L648.1 605.2L647.5 605.2L646.9 605.2L646.3 605.3L645.7 605.4L645.2 605.5L644.6 605.6L644.1 605.7L643.6 605.8L643.1 606.0L642.6 606.1L642.2 606.3L641.8 606.5L641.4 606.7L641.1 606.8L640.7 607.0L640.5 607.2L640.2 607.3L640.0 607.5L639.8 607.6L640.0 608.0L640.1 608.1L640.4 608.1L640.7 608.1L641.0 608.2L641.3 608.2L641.6 608.3L642.0 608.3L642.4 608.4L642.8 608.5L643.2 608.6L643.6 608.8L644.0 608.9L644.4 609.1L644.8 609.3L645.2 609.5L645.6 609.7L646.0 609.9L646.3 610.2L646.7 610.4L647.0 610.7L647.3 611.0L647.6 611.2L647.8 611.5L648.0 611.8L648.2 612.1L648.4 612.3L648.6 612.6L648.8 612.9L649.0 613.2L649.1 613.5L649.3 613.8L649.4 614.0L649.5 614.3L649.6 614.6L649.6 614.9L649.7 615.2L649.8 615.5L649.8 615.7L649.8 616.0L649.8 616.3L649.8 616.5L649.8 616.8L649.8 617.0L649.8 617.3L649.7 617.5L649.7 617.8L649.7 618.0L649.6 618.3L649.5 618.5L649.4 618.7L649.3 618.9L649.2 619.0L649.1 619.2L648.9 619.4L648.8 619.6L648.7 619.8L648.5 620.0L648.4 620.2L648.2 620.5L648.1 620.7L648.0 620.9L647.8 621.2L647.7 621.5L647.5 621.8L647.4 622.1L647.3 622.4L647.1 622.7L647.0 623.1L646.9 623.4L646.8 623.8L646.7 624.2L646.6 624.6L646.5 625.1L646.4 625.6L646.3 626.0L646.2 626.5L646.1 626.9L646.0 627.3L645.9 627.7L645.8 628.1L645.7 628.4L645.6 628.8L645.5 629.2L645.4 629.5L645.3 629.8L645.2 630.1L645.1 630.4L644.9 630.7L644.8 630.9L644.7 631.2L644.5 631.4L644.4 631.6L644.3 631.8L644.2 631.9L644.0 632.0L643.9 632.1L643.8 632.2L643.7 632.3L643.5 632.4L643.3 632.5L643.1 632.6L642.8 632.7L642.6 632.9L642.3 633.0L641.9 633.1L641.6 633.1L641.3 633.2L640.9 633.3L640.6 633.3L640.2 633.4L639.9 633.4L639.5 633.5L639.1 633.5L638.7 633.5L638.4 633.5L638.0 633.5L637.5 633.5L637.2 633.5L636.8 633.5L636.4 633.4L636.1 633.4L635.8 633.5L635.6 633.5L635.4 633.5L635.3 633.5L635.1 633.6L634.9 633.6L634.7 633.7L634.5 633.7L634.3 633.7L634.1 633.7L633.9 633.8L633.7 633.8L633.5 633.8L633.3 633.8L633.0 633.8L632.8 633.8L632.5 633.8L632.3 633.7L632.0 633.7L631.7 633.6L631.4 633.5L631.1 633.4L630.9 633.4L630.6 633.3L630.3 633.2L630.1 633.1L629.8 633.0L629.6 632.9L629.3 632.8L629.1 632.6L628.8 632.5L628.5 632.3L628.2 632.1L628.0 631.9L627.7 631.7L627.4 631.5L627.1 631.2L626.9 631.0L626.6 630.7L626.4 630.4L626.1 630.2L625.8 629.9L625.6 629.6L625.3 629.2L625.1 628.9L624.9 628.6L624.7 628.3L624.5 628.0L624.3 627.7L624.1 627.4L624.0 627.1L623.8 626.7L623.7 626.4L623.5 626.1L623.4 625.8L623.3 625.4L623.2 625.1L623.1 624.7L623.0 624.3L622.9 624.0L622.8 623.6L622.7 623.2L622.6 622.9L622.6 622.5L622.5 622.1L622.5 621.7L622.4 621.3L622.4 620.9L622.3 620.5L622.3 620.1L622.2 619.7L622.2 619.3L622.1 618.9L622.1 618.5L622.1 618.1L622.1 617.7L622.0 617.3L622.0 616.9L622.0 616.5L622.0 616.2L622.0 615.8L622.0 615.4L622.0 615.1L622.0 614.7L622.0 614.3L622.0 614.0L622.1 613.6L622.1 613.3L622.1 612.9L622.2 612.6L622.3 612.2L622.3 611.9L622.4 611.6L622.5 611.2L622.5 610.8L622.7 610.4L622.8 610.0L622.9 609.6L623.0 609.2L623.2 608.7L623.3 608.3L623.5 607.9L623.6 607.5L623.8 607.1L624.0 606.7L624.1 606.3L624.3 605.9L624.5 605.5L624.8 605.2L625.0 604.8L625.2 604.5L625.4 604.1L625.7 603.8L625.9 603.5L626.2 603.2L626.4 602.9L626.7 602.6L626.9 602.4L627.2 602.1L627.4 602.0L627.7 601.8L627.9 601.6L628.1 601.4L628.4 601.3L628.7 601.1L628.9 601.0L629.2 600.8L629.5 600.7L629.8 600.5L630.2 600.4L630.5 600.2L630.9 600.1L631.3 599.9L631.7 599.8L632.2 599.6L632.6 599.4L633.1 599.3L633.6 599.1L634.1 598.9L634.7 598.7L635.2 598.5L635.8 598.3L636.4 598.1L637.0 597.9L637.7 597.7L638.3 597.5L639.0 597.3L639.8 597.1L640.5 596.9L641.3 596.8L642.1 596.6L642.9 596.5L643.8 596.4L644.6 596.3L645.5 596.3L646.3 596.3L647.2 596.3L648.0 596.3L648.8 596.4L649.6 596.4L650.4 596.5L651.0 596.7L651.7 596.8L652.3 596.9L652.7 597.0L653.4 597.2L654.5 597.5L655.7 597.6L656.6 597.7L657.1 597.7L657.8 597.7L658.7 597.8L659.5 597.8L660.4 597.9L661.3 597.9L662.3 598.0L663.3 598.1L664.3 598.1L665.3 598.2L666.3 598.3L667.3 598.4L668.2 598.5L669.1 598.6L670.0 598.8L670.9 598.9L671.8 599.1L672.7 599.3L673.7 599.5L674.8 599.7L675.9 600.0L677.0 600.2L678.1 600.5L679.2 600.8L680.3 601.1L681.4 601.4L682.5 601.7L683.6 602.0L684.5 602.3L685.5 602.5L686.3 602.7L687.1 603.0L687.9 603.2L688.3 603.3ZM683.5 597.0a6.5 6.5 0 1 0 13.0 0a6.5 6.5 0 1 0 -13.0 0ZM660.5 562.4L660.6 562.6L660.7 562.8L660.9 563.0L661.1 563.3L661.4 563.5L661.7 563.8L662.0 564.0L662.3 564.3L662.6 564.6L663.0 564.9L663.4 565.2L663.9 565.4L664.3 565.7L664.8 566.0L665.3 566.2L665.8 566.5L666.3 566.7L666.8 566.9L667.3 567.1L667.8 567.4L668.3 567.6L668.8 567.7L669.2 567.9L669.6 568.1L670.0 568.3L670.4 568.5L670.8 568.7L671.2 568.9L671.7 569.1L672.2 569.3L672.7 569.5L673.3 569.7L673.9 569.9L674.5 570.1L675.2 570.3L675.9 570.4L676.6 570.5L677.4 570.6L678.2 570.7L679.0 570.7L679.9 570.6L680.8 570.5L681.7 570.4L682.7 570.1L683.7 569.8L684.7 569.4L685.6 568.9L686.6 568.3L687.4 567.7L688.2 567.1L689.0 566.5L689.6 565.8L690.3 565.2L690.9 564.5L691.5 563.8L692.0 563.0L692.5 562.3L693.0 561.5L693.4 560.7L693.8 560.0L694.1 559.2L694.4 558.4L694.7 557.7L695.0 556.9L695.2 556.1L695.4 555.3L695.6 554.6L695.7 553.8L695.8 553.0L696.0 552.2L696.0 551.3L696.1 550.4L696.1 549.5L696.1 548.6L696.1 547.5L696.0 546.5L695.8 545.4L695.6 544.4L695.4 543.3L695.1 542.3L694.8 541.2L694.5 540.1L694.0 539.1L693.6 538.1L693.1 537.0L692.6 536.0L692.0 535.0L691.4 534.0L690.8 533.1L690.1 532.2L689.4 531.2L688.7 530.4L687.9 529.5L687.1 528.7L686.3 527.9L685.4 527.1L684.5 526.3L683.6 525.6L682.6 524.9L681.6 524.3L680.6 523.6L679.6 523.1L678.5 522.5L677.4 522.1L676.3 521.6L675.2 521.2L674.1 520.9L673.0 520.6L671.9 520.3L670.8 520.1L669.7 519.9L668.6 519.8L667.6 519.7L666.5 519.6L665.5 519.6L664.5 519.5L663.5 519.6L662.5 519.6L661.6 519.7L660.7 519.8L659.9 519.9L659.0 520.0L658.2 520.1L657.4 520.3L656.6 520.4L655.8 520.6L655.0 520.8L654.1 521.0L653.3 521.2L652.5 521.5L651.7 521.8L650.9 522.1L650.1 522.4L649.3 522.8L648.4 523.2L647.6 523.6L646.8 524.1L646.0 524.6L645.2 525.1L644.4 525.7L643.6 526.4L642.8 527.1L642.0 527.8L641.3 528.6L640.6 529.4L639.9 530.3L639.2 531.3L638.6 532.3L638.0 533.3L637.4 534.4L636.9 535.5L636.5 536.6L636.1 537.8L635.8 539.0L635.5 540.1L635.3 541.3L635.1 542.4L635.0 543.5L634.9 544.5L634.9 545.6L634.9 546.6L635.0 547.4L635.1 548.3L635.2 549.1L635.3 549.8L635.4 550.4L635.5 550.9L635.6 551.4L635.7 552.0L635.7 552.6L635.8 553.2L635.9 553.9L636.0 554.8L636.1 555.7L636.2 556.7L636.3 557.7L636.5 558.7L636.6 559.8L636.8 560.9L637.0 562.0L637.1 563.1L637.4 564.1L637.6 565.2L637.8 566.2L638.1 567.2L638.4 568.2L638.8 569.2L639.2 570.1L639.7 570.9L640.2 571.7L640.7 572.4L641.2 573.1L641.8 573.7L642.3 574.3L642.8 574.7L643.3 575.2L643.7 575.5L644.1 575.8L644.4 576.1L644.7 576.3L644.9 576.4L645.1 576.6L645.4 576.8L645.6 577.0L645.8 577.3L646.1 577.6L646.4 577.9L646.7 578.3L647.0 578.7L647.4 579.1L647.8 579.5L648.2 579.9L648.6 580.4L649.0 580.9L649.5 581.4L650.0 581.9L650.6 582.4L651.1 582.9L651.8 583.4L652.4 583.9L653.1 584.4L653.8 584.9L654.6 585.5L655.5 586.0L656.3 586.5L657.3 587.0L658.2 587.5L659.2 588.1L660.1 588.6L661.1 589.1L662.1 589.6L663.0 590.1L664.0 590.5L664.8 591.0L665.7 591.4L666.5 591.8L667.1 592.1L667.8 592.4L668.3 592.7L668.7 592.9L675.3 581.1L674.9 580.9L674.3 580.5L673.7 580.1L672.9 579.7L672.2 579.3L671.4 578.8L670.6 578.3L669.7 577.8L668.8 577.3L667.9 576.8L667.1 576.2L666.2 575.7L665.4 575.2L664.6 574.7L663.9 574.2L663.2 573.8L662.7 573.4L662.2 573.1L661.8 572.8L661.4 572.5L661.0 572.2L660.7 571.9L660.3 571.6L660.0 571.3L659.7 571.0L659.4 570.7L659.1 570.4L658.8 570.1L658.5 569.8L658.2 569.4L657.9 569.1L657.6 568.7L657.2 568.3L656.9 567.9L656.5 567.5L656.0 567.0L655.5 566.5L655.1 566.0L654.6 565.6L654.2 565.2L653.8 564.8L653.5 564.6L653.3 564.3L653.1 564.1L653.0 564.0L652.9 563.9L652.8 563.8L652.8 563.8L652.8 563.7L652.8 563.7L652.7 563.6L652.7 563.5L652.6 563.4L652.6 563.2L652.5 562.8L652.3 562.4L652.2 561.8L652.0 561.1L651.8 560.3L651.7 559.4L651.5 558.5L651.3 557.5L651.2 556.6L651.0 555.6L650.8 554.6L650.7 553.7L650.6 552.8L650.4 552.0L650.3 551.1L650.2 550.4L650.1 549.8L650.0 549.4L650.0 549.0L650.0 548.8L650.1 548.5L650.1 548.2L650.1 547.8L650.2 547.5L650.2 547.1L650.3 546.7L650.4 546.3L650.6 545.8L650.7 545.4L650.9 545.0L651.1 544.6L651.3 544.1L651.5 543.7L651.7 543.3L652.0 542.9L652.3 542.6L652.6 542.3L652.8 541.9L653.1 541.6L653.4 541.4L653.7 541.2L653.9 541.0L654.1 540.8L654.4 540.7L654.6 540.6L654.8 540.5L655.1 540.3L655.3 540.2L655.6 540.1L655.9 540.0L656.2 539.9L656.4 539.8L656.7 539.8L657.1 539.7L657.4 539.6L657.7 539.5L658.1 539.5L658.4 539.4L658.8 539.4L659.2 539.3L659.6 539.3L660.0 539.3L660.5 539.2L660.9 539.2L661.4 539.2L661.9 539.2L662.4 539.3L662.8 539.3L663.3 539.3L663.7 539.4L664.2 539.5L664.6 539.5L665.0 539.6L665.4 539.7L665.8 539.9L666.2 540.0L666.6 540.2L667.0 540.3L667.4 540.5L667.8 540.7L668.1 540.9L668.4 541.1L668.8 541.3L669.1 541.5L669.4 541.7L669.6 541.9L669.9 542.2L670.1 542.4L670.3 542.6L670.6 542.9L670.8 543.2L671.0 543.4L671.2 543.7L671.4 544.1L671.6 544.4L671.7 544.7L671.9 545.0L672.0 545.4L672.2 545.7L672.3 546.0L672.4 546.4L672.5 546.7L672.6 547.0L672.7 547.4L672.7 547.7L672.8 548.0L672.8 548.3L672.9 548.6L672.9 548.9L673.0 549.2L673.0 549.5L673.0 549.7L673.1 550.0L673.1 550.4L673.1 550.7L673.2 551.0L673.2 551.3L673.2 551.7L673.3 552.0L673.3 552.3L673.4 552.5L673.4 552.8L673.5 553.0L673.5 553.2L673.6 553.3L673.6 553.5L673.7 553.6L673.8 553.8L673.9 553.9L674.0 554.0L674.1 554.1L674.2 554.1L674.3 554.2L674.4 554.3L674.5 554.4L674.6 554.5L674.7 554.6L674.8 554.7L675.0 554.7L675.1 554.8L675.3 554.9L675.4 555.0L675.5 555.2L675.5 555.4L675.4 555.6L675.3 555.8L675.2 556.1L675.0 556.3L674.8 556.5L674.5 556.7L674.3 557.0L673.9 557.2L673.6 557.4L673.2 557.6L672.8 557.8L672.4 558.0L672.0 558.2L671.5 558.4L671.0 558.5L670.5 558.7L670.1 558.9L669.6 559.1L669.1 559.3L668.6 559.5L668.2 559.7L667.8 559.9L667.4 560.1L667.0 560.3L666.6 560.5L666.2 560.7L665.8 560.8L665.4 561.0L665.0 561.2L664.6 561.3L664.2 561.4L663.8 561.5L663.4 561.6L663.0 561.7L662.7 561.8L662.3 561.9L662.0 561.9L661.7 561.9L661.4 562.0L661.1 562.0L660.9 562.0L660.7 562.0ZM654.3 585.2L655.0 585.6L656.0 586.2L657.1 586.9L658.5 587.7L660.0 588.6L661.7 589.5L663.5 590.4L665.4 591.4L667.3 592.3L669.3 593.2L671.3 594.0L673.3 594.7L675.3 595.4L677.4 596.1L679.6 596.8L681.7 597.5L684.0 598.1L686.2 598.8L688.5 599.4L690.9 600.1L693.5 600.8L696.2 601.6L699.0 602.3L701.8 603.1L704.8 603.9L707.7 604.6L710.6 605.3L713.4 606.0L716.0 606.7L718.5 607.3L720.9 607.9L723.2 608.4L725.4 608.9L727.4 609.3L729.4 609.7L731.3 610.1L733.2 610.5L735.0 610.9L736.8 611.4L738.5 611.8L740.1 612.3L741.7 612.8L743.3 613.4L744.9 614.0L746.6 614.6L748.4 615.3L750.2 615.9L752.1 616.4L754.2 616.9L756.2 617.2L758.2 617.4L760.2 617.6L762.1 617.6L764.1 617.7L766.1 617.6L768.1 617.5L770.2 617.2L772.3 616.9L774.4 616.5L776.4 616.1L778.5 615.6L780.5 615.0L782.5 614.4L784.7 613.8L786.9 613.0L789.1 612.1L791.4 611.0L793.7 609.8L796.1 608.5L798.6 606.9L801.1 605.1L803.8 603.1L806.5 600.9L809.3 598.6L812.1 596.2L814.8 593.7L817.5 591.3L820.0 588.9L822.4 586.5L824.5 584.3L826.5 582.1L828.3 579.8L829.9 577.7L831.2 575.6L832.5 573.7L833.6 571.8L834.8 570.1L835.9 568.4L837.1 566.8L838.4 565.2L839.9 563.5L841.6 561.7L843.4 559.9L845.3 558.1L847.2 556.4L849.1 554.6L851.0 552.9L852.9 551.2L854.7 549.7L856.4 548.1L858.1 546.7L859.7 545.4L861.2 544.1L862.7 542.8L864.2 541.7L865.6 540.6L867.0 539.5L868.5 538.5L869.9 537.5L871.4 536.6L872.9 535.7L874.5 534.8L876.0 533.9L877.5 533.2L879.1 532.4L880.7 531.7L882.2 531.0L883.8 530.3L885.5 529.7L887.1 529.0L888.8 528.4L890.5 527.8L892.3 527.3L894.0 526.7L895.8 526.2L897.5 525.7L899.3 525.3L901.0 524.9L902.7 524.6L904.5 524.3L906.2 524.0L908.0 523.8L909.7 523.6L911.4 523.5L913.0 523.4L914.7 523.3L916.3 523.3L917.8 523.4L919.4 523.6L921.0 523.8L922.6 524.0L924.3 524.4L926.0 524.8L927.7 525.2L929.4 525.7L931.1 526.3L932.8 527.0L934.4 527.7L936.1 528.5L937.6 529.4L939.2 530.3L940.8 531.5L942.5 532.8L944.2 534.3L945.9 535.8L947.6 537.4L949.2 539.0L950.7 540.5L952.2 542.0L953.5 543.4L954.6 544.6L955.6 545.9L956.6 547.1L957.5 548.4L958.3 549.6L959.0 550.8L959.8 552.0L960.4 553.0L961.0 554.0L961.5 554.7L969.9 549.3L969.5 548.6L969.0 547.8L968.4 546.8L967.7 545.6L966.9 544.2L966.0 542.7L965.0 541.2L963.9 539.6L962.6 538.0L961.3 536.4L960.0 534.9L958.5 533.2L956.9 531.5L955.3 529.7L953.5 527.9L951.7 526.1L949.8 524.4L947.8 522.7L945.8 521.1L943.8 519.6L941.8 518.4L939.7 517.2L937.7 516.2L935.6 515.2L933.5 514.4L931.4 513.6L929.3 512.9L927.2 512.4L925.1 511.9L923.0 511.4L920.9 511.1L918.7 510.9L916.6 510.8L914.5 510.8L912.5 510.8L910.4 511.0L908.4 511.1L906.4 511.4L904.5 511.6L902.5 511.9L900.5 512.3L898.5 512.7L896.4 513.1L894.4 513.6L892.4 514.1L890.4 514.7L888.4 515.3L886.5 516.0L884.6 516.7L882.7 517.4L880.8 518.1L879.0 518.9L877.2 519.7L875.4 520.5L873.6 521.4L871.9 522.3L870.2 523.3L868.4 524.3L866.7 525.3L865.0 526.4L863.3 527.5L861.6 528.7L860.0 529.8L858.4 531.0L856.8 532.3L855.2 533.5L853.6 534.8L851.9 536.2L850.3 537.6L848.6 539.1L846.8 540.6L844.9 542.3L843.0 544.0L841.0 545.8L839.0 547.6L837.0 549.5L835.0 551.4L833.1 553.3L831.2 555.3L829.4 557.2L827.7 559.3L826.1 561.3L824.7 563.3L823.4 565.2L822.2 567.0L821.0 568.8L819.8 570.5L818.5 572.2L817.1 573.9L815.5 575.7L813.5 577.7L811.3 579.9L808.9 582.2L806.4 584.5L803.8 586.8L801.2 589.1L798.6 591.2L796.1 593.2L793.8 595.0L791.6 596.5L789.7 597.8L787.8 598.8L785.9 599.8L784.1 600.6L782.4 601.3L780.6 601.9L778.9 602.5L777.1 603.0L775.3 603.5L773.6 603.9L771.9 604.3L770.2 604.6L768.6 604.8L767.1 605.0L765.5 605.1L764.0 605.1L762.4 605.1L760.9 605.0L759.3 604.9L757.8 604.8L756.4 604.6L755.1 604.3L753.7 604.0L752.2 603.6L750.6 603.1L749.0 602.5L747.3 601.9L745.5 601.3L743.5 600.7L741.5 600.2L739.5 599.7L737.6 599.3L735.7 598.9L733.8 598.5L731.9 598.1L729.9 597.7L727.9 597.2L725.8 596.8L723.7 596.3L721.5 595.7L719.1 595.0L716.5 594.3L713.8 593.5L711.0 592.7L708.1 591.8L705.3 591.0L702.5 590.1L699.7 589.3L697.1 588.5L694.7 587.7L692.3 586.9L690.0 586.2L687.8 585.5L685.7 584.8L683.6 584.2L681.6 583.5L679.7 582.8L678.0 582.2L676.3 581.5L674.7 580.8L673.2 580.1L671.7 579.3L670.2 578.4L668.8 577.5L667.4 576.6L666.0 575.7L664.8 574.8L663.6 574.0L662.6 573.3L661.7 572.8ZM650.8 579.0a7.2 7.2 0 1 0 14.5 0a7.2 7.2 0 1 0 -14.5 0ZM754.2 606.7L751.9 604.1L748.8 600.4L746.7 597.8L747.2 598.6L745.9 606.4L748.1 602.1L748.0 599.6L747.9 599.2L747.9 598.8L747.9 598.3L747.8 597.8L747.8 597.3L747.8 596.7L747.9 596.1L747.9 595.6L748.0 595.0L748.1 594.4L748.2 593.8L748.3 593.2L748.5 592.6L748.6 592.0L748.8 591.4L749.0 590.7L749.2 590.1L749.4 589.4L749.7 588.8L749.9 588.0L750.2 587.2L750.4 586.5L750.6 585.8L750.7 585.1L750.9 584.5L751.1 583.9L751.3 583.3L751.5 582.7L751.6 582.2L751.8 581.7L752.0 581.2L752.2 580.8L752.5 580.4L752.7 580.1L752.9 579.8L753.1 579.5L753.3 579.3L753.6 579.1L753.8 579.0L754.0 578.8L754.1 578.8L754.3 578.8L754.5 578.8L754.7 578.8L754.9 578.7L755.1 578.7L755.4 578.6L755.8 578.5L756.1 578.5L756.4 578.4L756.8 578.4L757.1 578.4L757.5 578.4L757.8 578.4L758.2 578.4L758.6 578.4L758.9 578.4L759.3 578.5L759.7 578.5L760.0 578.6L760.4 578.6L760.7 578.7L761.1 578.8L761.5 578.8L761.8 578.9L762.2 578.9L762.5 579.0L762.9 579.0L763.2 579.0L763.6 579.1L763.9 579.1L764.2 579.1L764.6 579.1L764.9 579.2L765.2 579.2L765.4 579.2L765.7 579.2L766.0 579.2L766.3 579.2L766.5 579.2L766.8 579.2L767.0 579.3L767.3 579.3L767.5 579.3L767.7 579.3L767.9 579.3L768.2 579.3L768.3 579.3L768.5 579.3L768.7 579.4L768.9 579.4L769.0 579.4L769.1 579.4L769.3 579.4L769.4 579.4L769.6 579.4L769.7 579.4L769.9 579.4L770.1 579.5L770.3 579.5L770.4 579.6L770.6 579.7L770.8 579.8L771.0 579.9L771.2 580.1L771.4 580.2L771.6 580.4L771.8 580.6L772.0 580.8L772.2 581.0L772.3 581.2L772.5 581.5L772.7 581.7L772.8 582.0L773.0 582.3L773.1 582.5L773.3 582.8L773.4 583.0L773.5 583.2L773.6 583.3L773.7 583.5L773.8 583.6L773.8 583.8L773.9 584.0L774.0 584.2L774.0 584.3L774.1 584.5L774.1 584.7L774.2 584.9L774.2 585.1L774.3 585.3L774.3 585.5L774.4 585.8L774.4 586.0L774.5 586.3L774.5 586.5L774.6 586.8L774.6 587.1L774.6 587.4L774.7 587.7L774.7 588.0L774.8 588.4L774.9 588.8L774.9 589.2L774.9 589.6L775.0 590.0L775.0 590.5L775.0 590.9L775.0 591.4L774.9 591.9L774.9 592.4L774.8 592.9L774.7 593.3L774.6 593.8L774.5 594.3L774.4 594.7L774.2 595.1L774.1 595.5L773.9 595.9L773.8 596.2L773.6 596.5L773.4 596.8L773.3 597.1L773.2 597.3L773.4 597.7L773.6 597.7L773.9 597.8L774.3 597.8L774.7 597.8L775.1 597.8L775.6 597.8L776.1 597.7L776.6 597.7L777.2 597.6L777.7 597.5L778.3 597.3L779.0 597.1L779.6 596.9L780.2 596.6L780.9 596.3L781.5 595.9L782.1 595.6L782.7 595.2L783.3 594.7L783.9 594.3L784.4 593.9L784.9 593.4L785.3 592.9L785.7 592.5L786.1 592.1L786.4 591.6L786.7 591.2L787.0 590.8L787.3 590.4L787.5 589.9L787.8 589.5L788.0 589.1L788.2 588.6L788.4 588.2L788.6 587.7L788.8 587.3L788.9 586.8L789.1 586.3L789.2 585.9L789.3 585.4L789.5 584.8L789.6 584.3L789.7 583.8L789.8 583.2L789.9 582.6L789.9 582.0L790.0 581.4L790.1 580.9L790.1 580.3L790.2 579.7L790.2 579.1L790.2 578.5L790.3 577.9L790.3 577.2L790.2 576.5L790.2 575.8L790.2 575.1L790.1 574.4L790.0 573.6L789.8 572.8L789.7 572.0L789.5 571.2L789.2 570.4L788.9 569.5L788.6 568.7L788.2 567.8L787.8 567.0L787.3 566.1L786.8 565.3L786.3 564.4L785.6 563.6L785.0 562.8L784.3 562.1L783.6 561.3L782.8 560.6L782.1 559.9L781.3 559.3L780.5 558.6L779.7 558.0L778.8 557.5L777.9 556.9L777.0 556.4L776.1 556.0L775.2 555.5L774.3 555.1L773.3 554.7L772.3 554.4L771.3 554.1L770.4 553.8L769.4 553.6L768.4 553.4L767.4 553.2L766.3 553.1L765.3 553.0L764.3 553.0L763.3 553.0L762.3 553.0L761.3 553.1L760.2 553.2L759.2 553.4L758.1 553.6L757.0 553.8L755.9 554.1L754.9 554.5L753.8 554.9L752.7 555.3L751.7 555.7L750.6 556.3L749.6 556.8L748.6 557.4L747.6 558.0L746.7 558.7L745.7 559.4L744.8 560.1L743.9 560.9L743.1 561.7L742.3 562.5L741.5 563.3L740.7 564.3L739.9 565.2L739.2 566.3L738.5 567.3L737.9 568.5L737.4 569.6L737.0 570.7L736.6 571.8L736.3 572.9L736.1 573.9L735.9 574.9L735.8 575.9L735.7 576.8L735.7 577.6L735.7 578.5L735.7 579.3L735.7 580.0L735.7 580.7L735.8 581.4L735.8 582.0L735.8 582.6L735.9 583.1L735.9 583.6L735.9 584.0L735.9 584.4L735.9 584.8L735.8 585.2L735.7 585.8L735.6 586.4L735.5 587.0L735.3 587.7L735.1 588.6L734.9 589.4L734.8 590.3L734.6 591.2L734.4 592.1L734.3 593.1L734.1 594.1L734.0 595.1L734.0 596.1L733.9 597.0L733.9 598.0L733.9 599.0L734.0 599.9L734.1 600.8L734.2 601.6L734.2 600.2L736.0 596.4L734.4 604.5L736.3 607.2L739.3 609.8L743.1 613.0L745.8 615.3ZM744.0 611.0a6.0 6.0 0 1 0 12.0 0a6.0 6.0 0 1 0 -12.0 0ZM713.9 566.9L731.5 579.0L735.3 588.2L736.2 597.5L730.6 601.2L718.6 595.7L713.0 581.7ZM691.1 637.5L690.7 636.9L690.2 636.2L689.5 635.3L688.8 634.4L688.1 633.3L687.4 632.3L686.8 631.2L686.2 630.2L685.8 629.2L685.5 628.4L685.3 627.5L685.0 626.6L684.7 625.6L684.5 624.7L684.3 623.8L684.2 623.0L684.2 622.3L684.3 621.8L684.4 621.4L684.6 621.1L684.8 620.8L685.1 620.3L685.5 619.7L686.1 619.1L686.6 618.4L687.3 617.8L688.0 617.3L688.7 616.8L689.4 616.4L690.0 616.1L690.7 615.9L691.5 615.7L692.4 615.5L693.5 615.4L694.7 615.3L695.9 615.3L697.3 615.3L698.7 615.3L700.2 615.4L701.6 615.5L702.9 615.6L704.2 615.8L705.6 616.1L707.1 616.4L708.7 616.8L710.3 617.2L712.1 617.6L713.9 618.0L715.9 618.3L717.8 618.6L719.9 618.9L722.0 619.2L724.2 619.4L726.4 619.7L728.7 619.9L731.0 620.1L733.3 620.3L735.6 620.4L737.8 620.5L739.9 620.5L742.0 620.4L744.1 620.3L746.2 620.1L748.2 619.9L750.2 619.6L752.0 619.3L753.6 619.1L755.1 618.8L756.3 618.6L757.3 618.5L756.7 611.5L755.7 611.5L754.4 611.6L752.9 611.6L751.3 611.7L749.5 611.7L747.7 611.7L745.7 611.7L743.8 611.7L741.9 611.6L740.1 611.5L738.3 611.3L736.3 611.1L734.2 610.9L732.0 610.6L729.8 610.3L727.6 610.0L725.4 609.7L723.3 609.4L721.3 609.1L719.4 608.8L717.6 608.5L715.9 608.1L714.3 607.8L712.6 607.4L711.0 607.0L709.3 606.6L707.6 606.3L705.9 605.9L704.2 605.7L702.4 605.5L700.8 605.4L699.2 605.3L697.5 605.2L695.9 605.2L694.2 605.2L692.6 605.3L690.9 605.5L689.3 605.8L687.6 606.3L686.0 606.9L684.5 607.7L683.1 608.6L681.8 609.6L680.6 610.8L679.5 611.9L678.5 613.2L677.6 614.5L676.9 615.9L676.3 617.3L675.8 618.9L675.7 620.5L675.7 622.1L676.0 623.6L676.4 625.0L676.9 626.3L677.5 627.5L678.2 628.6L678.9 629.7L679.7 630.7L680.5 631.6L681.4 632.6L682.5 633.5L683.7 634.3L684.9 635.0L686.1 635.6L687.3 636.2L688.4 636.7L689.3 637.2L690.1 637.6L690.7 637.9ZM798.1 544.1L797.8 544.4L797.4 544.7L797.0 545.2L796.5 545.6L795.9 546.2L795.4 546.8L794.8 547.4L794.3 548.1L793.9 548.9L793.5 549.8L793.2 550.6L793.0 551.4L792.8 552.2L792.7 553.1L792.6 553.9L792.6 554.8L792.6 555.7L792.6 556.6L792.7 557.4L792.8 558.3L793.0 559.1L793.2 559.9L793.4 560.7L793.7 561.6L794.1 562.4L794.6 563.3L795.1 564.1L795.7 564.9L796.4 565.7L797.1 566.4L797.8 567.0L798.5 567.5L799.2 568.1L800.1 568.7L801.1 569.3L802.2 569.8L803.4 570.2L804.8 570.6L806.2 570.9L807.4 571.0L808.4 571.0L809.4 571.1L810.6 571.2L812.0 571.2L813.6 571.1L815.4 570.9L817.3 570.4L819.3 569.7L821.3 568.8L823.3 567.5L825.3 566.0L827.2 564.2L829.1 562.3L831.0 560.2L832.8 558.1L834.7 555.9L836.6 553.8L838.4 551.8L840.2 549.9L841.9 548.2L843.7 546.6L845.5 545.0L847.3 543.4L849.1 541.9L851.0 540.4L852.8 539.0L854.6 537.7L856.3 536.3L858.1 535.1L859.9 533.8L861.7 532.6L863.5 531.5L865.3 530.3L867.1 529.2L868.9 528.2L870.6 527.3L872.3 526.4L874.0 525.6L875.7 524.9L877.3 524.2L878.9 523.7L880.7 523.2L882.6 522.8L884.6 522.5L886.6 522.2L888.6 521.9L890.4 521.7L892.1 521.5L893.6 521.3L894.7 521.2L893.7 512.2L892.6 512.3L891.3 512.4L889.6 512.5L887.7 512.6L885.6 512.7L883.4 512.9L881.0 513.2L878.7 513.6L876.3 514.1L874.1 514.8L872.0 515.5L869.9 516.4L867.9 517.4L865.9 518.4L863.9 519.5L862.0 520.6L860.0 521.8L858.1 523.0L856.2 524.3L854.3 525.6L852.4 526.9L850.4 528.3L848.5 529.8L846.6 531.2L844.7 532.8L842.9 534.3L841.0 535.9L839.1 537.5L837.2 539.1L835.3 540.8L833.2 542.6L831.1 544.5L829.0 546.5L827.0 548.6L824.9 550.5L823.0 552.4L821.1 554.1L819.4 555.6L817.9 556.7L816.7 557.5L815.7 558.0L814.9 558.3L814.2 558.4L813.5 558.5L812.9 558.5L812.2 558.5L811.5 558.4L810.6 558.2L809.5 558.1L808.6 558.0L808.0 558.0L807.7 557.9L807.4 557.8L807.1 557.7L806.8 557.6L806.5 557.5L806.1 557.3L805.7 557.1L805.3 556.8L804.9 556.6L804.6 556.5L804.4 556.4L804.1 556.3L803.9 556.2L803.6 556.0L803.4 555.8L803.1 555.6L802.8 555.4L802.5 555.0L802.2 554.7L801.9 554.4L801.6 554.0L801.3 553.6L801.0 553.2L800.7 552.7L800.4 552.2L800.2 551.7L799.9 551.2L799.7 550.7L799.5 550.2L799.3 549.8L799.1 549.3L798.9 548.6L798.8 547.9L798.7 547.2L798.7 546.5L798.6 545.8L798.6 545.2L798.6 544.7L798.5 544.3ZM855.1 549.6L855.0 550.2L854.8 551.0L854.7 552.0L854.4 553.0L854.2 554.2L853.9 555.3L853.7 556.5L853.5 557.6L853.2 558.7L853.0 559.6L852.9 560.4L852.7 561.3L852.5 562.1L852.3 562.9L852.1 563.7L852.0 564.4L851.8 565.1L851.7 565.6L851.5 566.1L851.5 566.6L855.3 567.4L855.4 567.0L855.6 566.6L855.7 566.0L855.8 565.3L856.0 564.6L856.2 563.8L856.4 563.0L856.6 562.1L856.8 561.3L857.0 560.4L857.2 559.5L857.4 558.4L857.6 557.3L857.9 556.1L858.1 555.0L858.3 553.8L858.6 552.8L858.8 551.8L858.9 551.0L859.1 550.4ZM855.1 550.0a2.0 2.0 0 1 0 4.0 0a2.0 2.0 0 1 0 -4.0 0ZM832.1 579.8L841.3 573.3L847.8 567.7L857.1 566.8L863.6 574.2L870.1 583.5L863.6 582.6L860.8 589.1L855.3 585.3L849.7 592.8L846.9 586.3L838.6 586.3L841.3 581.6ZM878.6 513.6L878.5 513.7L878.3 513.9L878.0 514.1L877.8 514.3L877.5 514.5L877.2 514.8L876.9 515.0L876.6 515.3L876.3 515.6L876.0 515.9L875.7 516.2L875.3 516.5L875.0 516.8L874.7 517.2L874.3 517.5L874.0 517.9L873.7 518.2L873.3 518.6L873.0 518.9L872.7 519.3L872.5 519.6L872.2 520.0L871.9 520.3L871.6 520.7L871.3 521.1L871.0 521.5L870.7 522.0L870.5 522.4L870.2 522.8L870.0 523.2L869.9 523.6L869.7 524.0L869.5 524.3L869.4 524.6L869.3 524.9L869.1 525.2L869.0 525.5L868.9 525.7L868.8 526.0L868.6 526.2L868.5 526.5L868.4 526.7L868.2 527.0L868.1 527.3L867.9 527.5L867.7 527.8L867.5 528.1L867.3 528.5L867.1 528.9L866.8 529.3L866.5 529.7L866.2 530.2L865.9 530.7L865.5 531.2L865.2 531.7L864.9 532.3L864.6 532.9L864.2 533.4L863.9 534.1L863.6 534.7L863.3 535.3L863.0 536.0L862.7 536.6L862.5 537.3L862.2 537.9L862.0 538.6L861.8 539.3L861.6 540.0L861.4 540.6L861.2 541.3L861.1 542.0L861.0 542.7L860.9 543.4L860.8 544.1L860.7 544.8L860.7 545.5L860.7 546.2L860.7 546.9L860.8 547.6L860.8 548.2L860.9 548.9L861.0 549.5L861.1 550.2L861.2 550.7L861.3 551.3L861.4 551.9L861.5 552.4L861.6 553.0L861.7 553.5L861.8 554.0L861.9 554.4L862.0 554.9L862.1 555.3L862.1 555.7L862.2 556.1L862.2 556.4L862.2 556.8L862.2 557.1L862.2 557.4L862.1 557.7L862.0 558.1L862.0 558.6L861.9 559.0L861.8 559.5L861.8 560.1L861.7 560.7L861.6 561.3L861.6 562.0L861.6 562.7L861.6 563.4L861.6 564.2L861.7 565.0L861.8 565.9L862.0 566.8L862.2 567.7L862.5 568.6L862.9 569.5L863.4 570.5L863.9 571.4L864.5 572.3L865.2 573.2L865.9 574.0L866.6 574.7L867.4 575.4L868.2 576.1L869.1 576.6L869.9 577.2L870.8 577.7L871.7 578.2L872.5 578.6L873.4 579.0L874.3 579.3L875.2 579.6L876.1 579.9L876.9 580.2L877.8 580.4L878.6 580.6L879.4 580.8L880.2 580.9L881.0 581.1L881.8 581.2L882.6 581.4L883.3 581.5L884.1 581.6L884.8 581.7L885.6 581.8L886.4 581.9L887.3 582.0L888.3 582.1L889.3 582.2L890.3 582.2L891.4 582.3L892.5 582.2L893.6 582.2L894.8 582.1L896.0 581.9L897.2 581.7L898.5 581.4L899.7 581.1L900.9 580.7L902.2 580.2L903.4 579.7L904.6 579.1L905.8 578.4L907.0 577.6L908.1 576.8L909.2 575.9L910.2 575.0L911.2 573.9L912.1 572.9L912.9 571.8L913.7 570.7L914.3 569.5L915.0 568.4L915.5 567.2L916.0 566.1L916.5 564.9L916.8 563.7L917.2 562.6L917.4 561.5L917.6 560.3L917.8 559.3L917.9 558.2L918.0 557.2L918.1 556.2L918.1 555.3L918.1 554.4L918.0 553.6L918.0 552.8L917.9 552.1L917.9 551.4L917.8 550.8L917.7 550.3L917.6 549.7L917.5 549.1L917.4 548.5L917.2 548.0L917.1 547.4L916.9 546.9L916.7 546.3L916.6 545.8L916.4 545.2L916.2 544.7L915.9 544.1L915.7 543.6L915.4 543.0L915.2 542.5L914.9 541.9L914.5 541.3L914.2 540.7L913.8 540.1L913.4 539.6L913.0 538.9L912.5 538.3L912.1 537.8L911.6 537.3L911.1 536.9L910.7 536.5L910.2 536.2L909.8 535.9L909.3 535.6L908.9 535.3L908.4 535.1L908.0 534.8L907.5 534.6L907.0 534.4L906.6 534.2L906.1 534.1L905.6 534.0L905.1 533.8L904.6 533.7L904.2 533.7L903.7 533.6L903.2 533.5L902.7 533.5L902.2 533.4L901.7 533.4L901.2 533.4L900.6 533.3L900.0 533.3L899.5 533.3L898.8 533.3L898.1 533.3L897.5 533.3L896.8 533.4L896.0 533.5L895.3 533.6L894.6 533.8L893.9 534.0L893.3 534.2L892.6 534.4L892.0 534.6L891.4 534.9L890.8 535.2L890.3 535.5L889.8 535.8L889.3 536.1L888.9 536.3L888.5 536.6L888.2 536.9L887.9 537.2L887.6 537.4L887.3 537.6L887.2 537.8L887.4 538.2L887.6 538.2L887.9 538.2L888.3 538.1L888.6 538.1L889.0 538.1L889.5 538.1L889.9 538.1L890.4 538.1L890.9 538.1L891.4 538.2L891.9 538.3L892.4 538.4L893.0 538.5L893.5 538.6L894.0 538.8L894.5 539.0L895.0 539.2L895.5 539.4L895.9 539.6L896.3 539.9L896.7 540.1L897.0 540.4L897.3 540.6L897.6 540.9L897.8 541.1L898.0 541.4L898.1 541.7L898.3 541.9L898.4 542.2L898.5 542.4L898.6 542.7L898.7 542.9L898.7 543.1L898.7 543.4L898.7 543.6L898.7 543.8L898.7 544.0L898.6 544.2L898.6 544.3L898.5 544.5L898.5 544.7L898.4 544.9L898.4 545.1L898.3 545.3L898.3 545.5L898.3 545.7L898.3 545.9L898.2 546.1L898.1 546.2L898.1 546.4L898.0 546.5L897.8 546.5L897.8 546.7L897.7 546.8L897.6 547.0L897.5 547.2L897.4 547.4L897.4 547.6L897.3 547.8L897.2 548.1L897.2 548.4L897.1 548.7L897.1 549.0L897.1 549.4L897.0 549.8L897.0 550.2L897.0 550.6L897.0 551.0L897.0 551.5L897.0 551.9L897.0 552.4L897.0 553.0L897.0 553.5L897.1 554.0L897.1 554.5L897.2 555.1L897.2 555.5L897.3 556.0L897.3 556.4L897.4 556.9L897.4 557.3L897.5 557.7L897.5 558.1L897.5 558.5L897.5 558.8L897.5 559.2L897.5 559.6L897.5 559.9L897.4 560.3L897.4 560.6L897.3 560.9L897.2 561.3L897.1 561.5L897.0 561.8L896.9 562.0L896.8 562.2L896.6 562.5L896.4 562.7L896.2 562.9L896.0 563.1L895.7 563.3L895.4 563.5L895.0 563.8L894.6 564.0L894.2 564.1L893.8 564.3L893.3 564.5L892.8 564.6L892.3 564.7L891.8 564.8L891.2 564.9L890.7 565.0L890.1 565.0L889.5 565.0L889.0 565.1L888.4 565.1L887.7 565.1L887.1 565.0L886.4 565.0L885.7 565.0L885.1 565.0L884.4 564.9L883.8 564.9L883.2 564.9L882.6 564.8L882.1 564.8L881.5 564.7L881.0 564.7L880.5 564.6L880.0 564.5L879.6 564.4L879.1 564.4L878.7 564.3L878.3 564.2L878.0 564.0L877.6 563.9L877.3 563.8L877.0 563.7L876.7 563.6L876.4 563.5L876.2 563.4L876.0 563.3L875.8 563.2L875.7 563.1L875.6 563.0L875.4 562.9L875.3 562.9L875.2 562.8L875.0 562.6L874.8 562.4L874.7 562.3L874.5 562.1L874.4 561.8L874.3 561.5L874.1 561.2L874.0 560.9L873.9 560.5L873.8 560.2L873.7 559.7L873.6 559.3L873.5 558.8L873.4 558.3L873.3 557.8L873.2 557.3L873.1 556.7L873.0 556.1L872.9 555.6L872.8 555.0L872.7 554.4L872.6 553.8L872.4 553.3L872.3 552.8L872.2 552.4L872.1 551.9L872.0 551.4L871.9 551.0L871.9 550.5L871.8 550.1L871.7 549.6L871.7 549.2L871.7 548.8L871.6 548.3L871.6 547.9L871.6 547.5L871.6 547.1L871.6 546.7L871.6 546.3L871.6 546.0L871.7 545.6L871.7 545.2L871.8 544.9L871.8 544.5L871.9 544.1L872.0 543.8L872.1 543.3L872.2 542.9L872.3 542.5L872.5 542.1L872.6 541.7L872.8 541.2L872.9 540.8L873.1 540.4L873.3 539.9L873.5 539.5L873.7 539.1L873.9 538.6L874.2 538.2L874.4 537.8L874.7 537.4L874.9 537.0L875.2 536.6L875.4 536.1L875.7 535.7L876.0 535.3L876.2 534.9L876.5 534.5L876.8 534.1L877.0 533.7L877.3 533.2L877.6 532.8L877.8 532.4L878.0 532.0L878.2 531.6L878.4 531.2L878.6 530.8L878.8 530.4L879.0 530.1L879.1 529.8L879.3 529.4L879.4 529.2L879.5 528.9L879.6 528.6L879.8 528.4L879.9 528.2L880.0 528.0L880.0 527.8L880.1 527.7L880.2 527.6L880.3 527.4L880.4 527.3L880.6 527.1L880.7 526.9L880.9 526.6L881.2 526.4L881.4 526.1L881.6 525.9L881.8 525.6L882.0 525.4L882.3 525.1L882.5 524.9L882.7 524.6L883.0 524.4L883.2 524.2L883.4 524.0L883.7 523.7L883.9 523.6L884.1 523.4L884.3 523.2L884.5 523.0L884.7 522.9L884.9 522.7L885.1 522.6L885.2 522.5L885.4 522.4ZM876.5 518.0a5.5 5.5 0 1 0 11.0 0a5.5 5.5 0 1 0 -11.0 0Z"/></g><use href="#halfS" transform="translate(1931.600 0) scale(-1 1)"/>
<rect x="960" y="500" width="11.500" height="50" fill="#000"/></g>
<g fill="none" stroke="#2c2c20" stroke-width=".8" stroke-opacity=".0"><use href="#halfS"/><use href="#halfS" transform="translate(1931.600 0) scale(-1 1)"/></g>
<g filter="url(#fLeaf)" fill="#000"><g id="halfL"><path d="M793.2 654.3L795.8 652.1L799.4 649.0L803.6 645.4L808.1 641.5L812.5 637.5L816.4 633.9L819.7 630.4L822.9 626.8L825.9 623.1L828.9 619.6L831.9 616.4L834.9 613.5L838.0 610.9L841.1 608.6L844.1 606.5L847.2 604.7L850.3 603.2L853.5 602.0L856.8 601.1L860.4 600.6L863.9 600.4L867.4 600.4L870.8 600.8L873.9 601.4L876.8 602.5L879.6 603.9L882.3 605.6L884.8 607.5L886.9 609.5L888.7 611.6L890.2 613.8L891.4 616.2L892.3 618.6L892.9 621.2L893.3 623.8L893.4 626.5L893.2 629.2L892.8 632.1L892.2 635.1L891.2 638.0L890.1 640.7L888.7 643.2L887.1 645.4L885.2 647.5L883.1 649.5L880.8 651.3L878.3 652.9L875.8 654.3L873.1 655.5L870.5 656.4L867.6 657.2L864.6 657.8L861.1 658.4L857.2 658.9L852.7 659.5L847.7 660.1L842.3 660.6L836.7 660.9L831.1 661.0L825.7 660.8L819.9 660.1L813.7 659.0L807.5 657.7L801.6 656.3L796.7 655.1L793.2 654.3Z"/><path d="M791.3 489.8L793.4 487.5L796.2 484.4L799.6 480.7L803.3 476.8L807.1 472.9L810.8 469.4L814.6 466.1L818.6 462.7L822.7 459.4L826.9 456.3L831.0 453.5L834.9 451.2L838.8 449.3L842.5 447.7L846.2 446.4L849.8 445.4L853.5 444.7L857.2 444.3L861.0 444.2L864.9 444.4L868.8 444.9L872.6 445.6L876.2 446.7L879.5 448.0L882.5 449.7L885.4 451.7L888.1 454.1L890.5 456.6L892.6 459.2L894.3 461.9L895.6 464.8L896.5 467.9L897.1 471.2L897.4 474.4L897.4 477.6L897.1 480.5L896.4 483.3L895.4 486.0L894.0 488.6L892.4 491.1L890.6 493.3L888.7 495.3L886.7 497.1L884.5 498.6L882.1 500.0L879.5 501.1L876.8 502.0L873.9 502.8L870.9 503.3L867.8 503.7L864.5 503.9L861.0 503.8L857.4 503.4L853.5 502.8L849.4 501.6L845.0 499.8L840.4 497.8L835.7 495.8L830.8 493.9L825.7 492.6L819.9 491.6L813.4 491.0L806.8 490.5L800.5 490.2L795.1 490.0L791.3 489.8Z"/></g><use href="#halfL" transform="translate(1931.600 0) scale(-1 1)"/></g>
<linearGradient id="gLeafO" x1="0" y1="0.5" x2="1" y2="0.5"><stop offset="0" stop-color="#000" stop-opacity=".4"/><stop offset=".45" stop-color="#000" stop-opacity=".1"/><stop offset=".8" stop-color="#fff" stop-opacity=".05"/><stop offset="1" stop-color="#fff" stop-opacity=".3"/></linearGradient>
<g fill="url(#gLeafO)"><use href="#halfL"/><use href="#halfL" transform="translate(1931.600 0) scale(-1 1)"/></g>
<g fill="none" stroke="#3a3a2c" stroke-width=".9" stroke-opacity=".75"><use href="#halfL"/><use href="#halfL" transform="translate(1931.600 0) scale(-1 1)"/></g>
<g fill="#cacaca" stroke="#7a7a7a" stroke-width=".7"><g id="halfLS"><path d="M794.3 654.7L796.8 654.3L800.0 653.7L803.9 653.1L808.2 652.4L812.9 651.5L817.7 650.7L822.5 649.7L827.2 648.6L831.7 647.4L835.7 646.1L839.4 644.7L843.0 643.1L846.4 641.5L849.8 639.7L853.1 637.9L856.2 636.0L859.3 634.1L862.2 632.2L865.1 630.3L867.8 628.5L870.5 626.7L873.1 624.8L875.7 622.9L878.1 621.0L880.4 619.1L882.7 617.2L884.8 615.3L886.8 613.4L888.7 611.5L890.5 609.5L892.2 607.6L893.8 605.7L895.2 603.7L896.5 601.7L897.7 599.8L898.8 597.8L899.8 595.9L900.7 593.9L901.5 592.0L902.2 590.1L902.7 588.1L903.1 586.0L903.3 583.9L903.4 581.8L903.5 579.8L903.4 578.0L903.3 576.3L903.3 574.8L903.2 573.6L903.2 572.7L898.4 572.6L898.4 573.7L898.4 575.0L898.5 576.5L898.6 578.1L898.6 579.9L898.6 581.7L898.5 583.5L898.3 585.3L898.0 587.0L897.6 588.6L897.0 590.3L896.3 592.0L895.5 593.7L894.6 595.5L893.5 597.3L892.4 599.1L891.2 600.9L889.9 602.7L888.5 604.5L886.9 606.3L885.3 608.1L883.5 609.9L881.5 611.7L879.5 613.6L877.3 615.4L875.1 617.2L872.7 619.0L870.3 620.9L867.7 622.7L865.1 624.5L862.4 626.3L859.6 628.2L856.7 630.1L853.7 631.9L850.7 633.8L847.5 635.6L844.3 637.4L841.0 639.0L837.6 640.6L834.2 642.1L830.4 643.5L826.2 644.9L821.7 646.2L817.0 647.5L812.2 648.7L807.7 649.8L803.4 650.8L799.6 651.7L796.4 652.5L793.9 653.1Z"/><path d="M794.4 489.6L796.3 488.9L798.7 488.1L801.5 487.2L804.7 486.1L808.1 484.9L811.7 483.8L815.4 482.7L819.1 481.6L822.7 480.7L826.2 479.9L829.6 479.3L833.2 478.6L836.9 478.1L840.6 477.6L844.4 477.1L848.2 476.7L852.0 476.4L855.7 476.1L859.3 475.9L862.8 475.8L866.3 475.8L869.8 475.8L873.3 475.9L876.8 476.1L880.2 476.3L883.5 476.6L886.7 477.0L889.8 477.5L892.7 478.1L895.4 478.8L897.9 479.5L900.3 480.4L902.5 481.3L904.6 482.4L906.7 483.5L908.7 484.7L910.7 486.0L912.6 487.4L914.6 488.8L916.6 490.3L918.6 491.8L920.5 493.5L922.4 495.2L924.3 497.0L926.2 498.9L928.0 500.8L929.8 502.7L931.5 504.6L933.1 506.5L934.6 508.4L936.1 510.2L937.5 512.2L938.9 514.3L940.3 516.4L941.6 518.5L942.8 520.5L943.9 522.4L944.9 524.0L945.8 525.5L946.5 526.6L951.6 523.4L950.9 522.4L950.1 521.0L949.1 519.3L948.0 517.4L946.7 515.3L945.4 513.2L944.0 511.0L942.5 508.8L940.9 506.6L939.3 504.6L937.7 502.6L936.0 500.7L934.2 498.7L932.4 496.7L930.5 494.7L928.5 492.7L926.5 490.8L924.5 489.0L922.4 487.2L920.2 485.5L918.2 484.0L916.1 482.5L914.1 481.0L911.9 479.6L909.7 478.3L907.4 477.0L905.0 475.8L902.5 474.8L899.8 473.8L896.9 473.0L893.9 472.3L890.8 471.7L887.5 471.2L884.1 470.8L880.6 470.5L877.1 470.3L873.5 470.2L869.9 470.2L866.3 470.2L862.7 470.3L859.0 470.5L855.3 470.7L851.5 471.1L847.6 471.5L843.8 472.0L839.9 472.5L836.1 473.2L832.3 473.9L828.7 474.7L825.1 475.5L821.6 476.6L817.9 477.8L814.2 479.2L810.6 480.7L807.0 482.2L803.7 483.7L800.7 485.1L798.0 486.3L795.7 487.4L793.9 488.1Z"/></g><use href="#halfLS" transform="translate(1931.600 0) scale(-1 1)"/></g>
<g stroke="#3a3a3a" stroke-width="1.600" stroke-opacity=".7" fill="none"><path id="stk" d="M831.2 617.2L847.9 613.5M820.1 635.8L840.5 630.2M807.1 648.7L831.2 643.2M851.6 658.0L866.5 648.7M834.9 453.6L851.6 456.4M816.4 467.5L840.5 465.7M825.7 491.6L844.2 486.1M851.6 500.9L862.8 495.3"/><use href="#stk" transform="translate(1931.600 0) scale(-1 1)"/></g>
<g fill="#b6b6b6" stroke="#3c3c30" stroke-width=".8" stroke-dasharray="1.500 1"><circle cx="1004.5" cy="465.7" r="6.4"/><circle cx="1002.6" cy="477.7" r="6.4"/><circle cx="997.1" cy="488.5" r="6.4"/><circle cx="988.5" cy="497.1" r="6.4"/><circle cx="977.7" cy="502.6" r="6.4"/><circle cx="965.7" cy="504.5" r="6.4"/><circle cx="953.7" cy="502.6" r="6.4"/><circle cx="942.9" cy="497.1" r="6.4"/><circle cx="934.3" cy="488.5" r="6.4"/><circle cx="928.8" cy="477.7" r="6.4"/><circle cx="926.9" cy="465.7" r="6.4"/><circle cx="928.8" cy="453.7" r="6.4"/><circle cx="934.3" cy="442.9" r="6.4"/><circle cx="942.9" cy="434.3" r="6.4"/><circle cx="953.7" cy="428.8" r="6.4"/><circle cx="965.7" cy="426.9" r="6.4"/><circle cx="977.7" cy="428.8" r="6.4"/><circle cx="988.5" cy="434.3" r="6.4"/><circle cx="997.1" cy="442.9" r="6.4"/><circle cx="1002.6" cy="453.7" r="6.4"/></g>
<circle cx="965.7" cy="465.7" r="40.500" fill="url(#gFlower)"/>
<path d="M985.5 468.8L1007.2 472.3M983.5 474.8L1003.1 484.8M979.8 479.8L995.4 495.4M974.8 483.5L984.8 503.1M968.8 485.5L972.3 507.2M962.6 485.5L959.1 507.2M956.6 483.5L946.6 503.1M951.6 479.8L936.0 495.4M947.9 474.8L928.3 484.8M945.9 468.8L924.2 472.3M945.9 462.6L924.2 459.1M947.9 456.6L928.3 446.6M951.6 451.6L936.0 436.0M956.6 447.9L946.6 428.3M962.6 445.9L959.1 424.2M968.8 445.9L972.3 424.2M974.8 447.9L984.8 428.3M979.8 451.6L995.4 436.0M983.5 456.6L1003.1 446.6M985.5 462.6L1007.2 459.1" stroke="#a4a4a4" stroke-width="1.100" fill="none"/>
<circle cx="965.7" cy="465.7" r="19.500" fill="#8a8a8a"/><circle cx="965.7" cy="465.7" r="17.500" fill="url(#gFc)"/>
<path d="M928.6 548.0L1002.8 548.0L1002.8 553.7L994.9 556.0C991.7 567.1 992.6 578.2 998.2 593.1C1005.6 607.9 1011.2 617.2 1010.3 630.2C1009.3 643.2 1000.1 654.3 995.4 660.2L1000.1 661.4L1000.1 668.2L997.3 671.0L934.2 671.0L931.4 668.2L931.4 661.4L936.0 660.2C931.4 654.3 922.1 643.2 921.2 630.2C920.3 617.2 925.8 607.9 933.3 593.1C938.8 578.2 939.8 567.1 936.6 556.0L928.6 553.7Z" fill="url(#gVase)" stroke="#3a3a30" stroke-width="1"/>
<clipPath id="cV"><path d="M928.6 548.0L1002.8 548.0L1002.8 553.7L994.9 556.0C991.7 567.1 992.6 578.2 998.2 593.1C1005.6 607.9 1011.2 617.2 1010.3 630.2C1009.3 643.2 1000.1 654.3 995.4 660.2L1000.1 661.4L1000.1 668.2L997.3 671.0L934.2 671.0L931.4 668.2L931.4 661.4L936.0 660.2C931.4 654.3 922.1 643.2 921.2 630.2C920.3 617.2 925.8 607.9 933.3 593.1C938.8 578.2 939.8 567.1 936.6 556.0L928.6 553.7Z"/></clipPath>
<g clip-path="url(#cV)"><rect x="915" y="545" width="101" height="130" fill="url(#gVaseV)"/>
<rect x="915" y="545" width="101" height="3" fill="#fff" fill-opacity=".12"/>
<rect x="915" y="553" width="101" height="5" fill="#000" fill-opacity=".18"/>
<rect x="915" y="659" width="101" height="4" fill="#000" fill-opacity=".2"/>
<rect x="915" y="667" width="101" height="5" fill="#000" fill-opacity=".25"/>
<rect x="915" y="578.500" width="101" height="1.600" fill="#fff" fill-opacity=".3"/><rect x="915" y="586.800" width="101" height="1.600" fill="#fff" fill-opacity=".3"/>
<rect x="915" y="619" width="101" height="17" fill="#fff" fill-opacity=".28"/>
<g fill="#000" fill-opacity=".14"><circle cx="931.0" cy="627.500" r="6.200"/><circle cx="948.2" cy="627.500" r="6.200"/><circle cx="965.4" cy="627.500" r="6.200"/><circle cx="982.6" cy="627.500" r="6.200"/><circle cx="999.8" cy="627.500" r="6.200"/></g>
</g>
</g>
</svg>
<div class="rh" style="top:56.5px"></div>
<div class="a" style="left:1871px;top:57.5px;width:14px;height:14px;background:#d4d4d4;border:1px solid;border-color:#fff #7a7a7a #7a7a7a #fff"></div>
<div class="a" style="left:1874px;top:60.5px;border:4.500px solid transparent;border-top:0;border-bottom:8px solid #555"></div>
<div class="a" style="left:1591px;top:77.5px;width:298px;height:27px;background:#fff;box-sizing:border-box;border:2px solid;border-color:#7c7c7c #e8e8e8 #e8e8e8 #7c7c7c"></div>
<div class="a" style="left:1868px;top:79.5px;width:20px;height:23px;background:#f0f0f0;box-sizing:border-box;border:1.500px solid;border-color:#fff #787878 #787878 #fff"></div>
<div class="a" style="left:1873px;top:89.5px;border:4.500px solid transparent;border-bottom:0;border-top:5px solid #111"></div>
<svg class="a" style="left:1589.5px;top:113.0px" width="22" height="22"><use href="#s-new" width="22" height="22" /></svg>
<svg class="a" style="left:1635.5px;top:113.0px" width="22" height="22"><use href="#s-open" width="22" height="22" /></svg>
<svg class="a" style="left:1681.0px;top:113.0px" width="22" height="22"><use href="#s-save" width="22" height="22" /></svg>
<svg class="a" style="left:1727.0px;top:113.0px" width="22" height="22"><use href="#s-brown" width="22" height="22" /></svg>
<svg class="a" style="left:1773.0px;top:113.0px" width="22" height="22"><use href="#s-bulbdoc" width="22" height="22" /></svg>
<svg class="a" style="left:1820.0px;top:113.0px" width="22" height="22"><use href="#s-trash" width="22" height="22" /></svg>
<svg class="a" style="left:1866.0px;top:111.5px" width="22" height="24"><use href="#s-bulbs" width="22" height="24" /></svg>
<div class="row" style="top:140px;height:32px"></div>
<div class="a" style="left:1594px;top:146px;width:21px;height:21px;box-sizing:border-box;background:#e8e8e8;border:1.500px solid;border-color:#fff #aaa #aaa #fff"></div>
<div class="a" style="left:1597px;top:149px;width:16px;height:16px;border-radius:50%;background:#000"></div>
<div class="a" style="left:1821px;top:146px;width:21px;height:21px;box-sizing:border-box;background:#dcdcdc;border:1.500px solid;border-color:#fff #999 #999 #fff"></div>
<svg class="a" style="left:1821px;top:146px" width="21" height="21" viewBox="0 0 21 21"><path d="M7 11V7.500a4 4 0 0 1 8 0V9" fill="none" stroke="#e8e8e8" stroke-width="2.400"/><path d="M7 11V7.500a4 4 0 0 1 8 0V9" fill="none" stroke="#9a9a9a" stroke-width="1"/><rect x="5" y="10.500" width="11" height="9" fill="url(#gGrey)"/><path d="M10.500 18.500v-5M8.300 15l2.200-2.300 2.200 2.300" stroke="#111" stroke-width="1.600" fill="none"/></svg>
<svg class="a" style="left:1844px;top:146px" width="21" height="21" viewBox="0 0 21 21"><rect width="21" height="21" fill="#dedede"/><path d="M3.500 0V21M0 17.500H20" stroke="#111" stroke-width="1.200" stroke-dasharray="3 1.500" fill="none"/><path d="M5 16l2.500-8 2 2L17 2.500l1.500 1.500-7.500 7.500 2 2z" fill="#111"/></svg>
<svg class="a" style="left:1866.2px;top:145.8px" width="21.5" height="21.5"><use href="#s-bulbbtn" width="21.5" height="21.5" /></svg>
<svg class="a" style="left:1852.0px;top:176.5px" width="15" height="15"><use href="#s-updn" width="15" height="15" /></svg>
<svg class="a" style="left:1874.500px;top:176.500px" width="15" height="15" viewBox="0 0 16 16"><g transform="rotate(180 7.500 7.500)"><use href="#s-updn"/></g></svg>
<div class="rh" style="top:215.5px"></div>
<div class="a" style="left:1871px;top:216.5px;width:14px;height:14px;background:#d4d4d4;border:1px solid;border-color:#fff #7a7a7a #7a7a7a #fff"></div>
<div class="a" style="left:1874px;top:219.5px;border:4.500px solid transparent;border-top:0;border-bottom:8px solid #555"></div>
<svg class="a" style="left:1590.0px;top:239.5px" width="21" height="21"><use href="#s-new" width="21" height="21" /></svg>
<svg class="a" style="left:1629.5px;top:239.5px" width="21" height="21"><use href="#s-open" width="21" height="21" /></svg>
<svg class="a" style="left:1667.5px;top:239.5px" width="21" height="21"><use href="#s-save" width="21" height="21" /></svg>
<svg class="a" style="left:1708.0px;top:239.5px" width="21" height="21"><use href="#s-brown" width="21" height="21" /></svg>
<svg class="a" style="left:1747.5px;top:239.5px" width="21" height="21"><use href="#s-greypage" width="21" height="21" /></svg>
<svg class="a" style="left:1787.5px;top:239.5px" width="21" height="21"><use href="#s-monasm" width="21" height="21" /></svg>
<svg class="a" style="left:1826.5px;top:239.5px" width="21" height="21"><use href="#s-trash" width="21" height="21" /></svg>
<svg class="a" style="left:1866.0px;top:237.5px" width="22" height="24"><use href="#s-bulbs" width="22" height="24" /></svg>
<div class="row" style="top:267px;height:29px"></div>
<svg class="a" style="left:1594.5px;top:271.5px" width="20" height="20"><use href="#s-mona" width="20" height="20" /></svg>
<div class="rh" style="top:316.5px"></div>
<div class="a" style="left:1871px;top:317.5px;width:14px;height:14px;background:#d4d4d4;border:1px solid;border-color:#fff #7a7a7a #7a7a7a #fff"></div>
<div class="a" style="left:1874px;top:320.5px;border:4.500px solid transparent;border-top:0;border-bottom:8px solid #555"></div>
<div class="a" style="left:1591px;top:338px;width:298px;height:27px;background:#fff;box-sizing:border-box;border:2px solid;border-color:#7c7c7c #e8e8e8 #e8e8e8 #7c7c7c"></div>
<div class="a" style="left:1868px;top:340px;width:20px;height:23px;background:#f0f0f0;box-sizing:border-box;border:1.500px solid;border-color:#fff #787878 #787878 #fff"></div>
<div class="a" style="left:1873px;top:350px;border:4.500px solid transparent;border-bottom:0;border-top:5px solid #111"></div>
<svg class="a" style="left:1590.0px;top:373.5px" width="21" height="21"><use href="#s-new" width="21" height="21" /></svg>
<svg class="a" style="left:1624.5px;top:373.5px" width="21" height="21"><use href="#s-open" width="21" height="21" /></svg>
<svg class="a" style="left:1657.5px;top:373.5px" width="21" height="21"><use href="#s-save" width="21" height="21" /></svg>
<svg class="a" style="left:1693.5px;top:373.5px" width="21" height="21"><use href="#s-brown" width="21" height="21" /></svg>
<svg class="a" style="left:1727.5px;top:373.5px" width="21" height="21"><use href="#s-merge" width="21" height="21" /></svg>
<svg class="a" style="left:1762.5px;top:373.5px" width="21" height="21"><use href="#s-bulbdoc" width="21" height="21" /></svg>
<svg class="a" style="left:1797.5px;top:373.5px" width="21" height="21"><use href="#s-xray" width="21" height="21" /></svg>
<svg class="a" style="left:1832.0px;top:373.5px" width="21" height="21"><use href="#s-trash" width="21" height="21" /></svg>
<svg class="a" style="left:1866.0px;top:371.5px" width="22" height="24"><use href="#s-bulbs" width="22" height="24" /></svg>
<div class="row" style="top:400px;height:32px"></div>
<svg class="a" style="left:1600px;top:403px" width="30" height="28" viewBox="0 0 30 28"><path d="M3 14c1-7 8-10 14-8s9 7 10 12c-3-5-8-8-13-8s-9 2-11 4z" fill="url(#gGold)"/><path d="M3 14c2-3 6-5 11-4.500s7 3 8 6.500c-3 1-8 1-12 0s-6-1-7-2z" fill="#9aa0d8"/><path d="M7 19v8M3 23h8" stroke="#111" stroke-width="1.300"/></svg>
<div class="arr" style="left:1636px;top:412.500px"></div>
<svg class="a" style="left:1866.2px;top:405.8px" width="21.5" height="21.5"><use href="#s-bulbbtn" width="21.5" height="21.5" /></svg>
<svg class="a" style="left:1852.0px;top:437.0px" width="15" height="15"><use href="#s-updn" width="15" height="15" /></svg>
<svg class="a" style="left:1874.500px;top:437px" width="15" height="15" viewBox="0 0 16 16"><g transform="rotate(180 7.500 7.500)"><use href="#s-updn"/></g></svg>
<svg class="a" style="left:1582px;top:1021px" width="336" height="34" viewBox="1582 1021 336 34">
<rect x="1582" y="1021" width="336" height="32.500" fill="#d6d6d6"/>
<rect x="1582" y="1021" width="336" height="32.500" filter="url(#fTex)"/>
<path d="M1641 1021.500H1918" stroke="#8e8e8e" stroke-width="1"/>
<path d="M1582 1053.300H1918" stroke="#a2a2a2" stroke-width="1.200"/>
<path d="M1582 1021h58v24q0 7-7 7.500H1582z" fill="#f0f0f0"/><path d="M1640 1021v24q0 7-7 7.500H1584" fill="none" stroke="#a8a8a8" stroke-width="1.200"/>
<path d="M1642 1022h59.500v23.500q0 6-6 6H1648q-6 0-6-6z" fill="#f1f1f1" stroke="#b8b8b8" stroke-width="1"/><path d="M1642.500 1046v-23.500h58.500" fill="none" stroke="#fcfcfc" stroke-width="1.200"/>
</svg>
<svg class="a" style="left:345px;top:56px" width="460" height="36" viewBox="345 56 460 36">
<text x="355.800" y="78.800" font-family="Liberation Sans,sans-serif" font-weight="700" font-size="18.500" fill="#111" textLength="19.500" lengthAdjust="spacingAndGlyphs">3D</text>
<g id="lens"><path d="M398.500 76.500l4.500 3.500" stroke="#e09040" stroke-width="4.200" stroke-linecap="round"/><circle cx="393" cy="71" r="7.300" fill="url(#gLens)" stroke="#8494b4" stroke-width="1.500"/></g>
<path d="M388.500 71h9M393 66.500v9" stroke="#3c6488" stroke-width="1.800"/>
<use href="#lens" x="28.700"/><path d="M417.200 71h9" stroke="#3c6488" stroke-width="1.800"/>
<use href="#lens" x="57.500"/><path d="M447 68.500c5-3 8 1 6 4s-6 2-5-1" fill="none" stroke="#a09028" stroke-width="2"/><path d="M445 66l5 .5-3.500 4z" fill="#a09028"/>
<path d="M471.500 63v22" stroke="#b4b4b4" stroke-width="1.300"/>
<use href="#lens" x="96.500"/><text x="484.500" y="74" font-family="Liberation Sans,sans-serif" font-weight="700" font-size="7.500" fill="#5878a0" textLength="10" lengthAdjust="spacingAndGlyphs">1:1</text>
<use href="#lens" x="124.700"/><rect x="513.700" y="67.500" width="8" height="6.500" fill="none" stroke="#3c6488" stroke-width="1.700"/>
<path d="M540 72c0-5 4-8 8-8s7 3 7 6c2 1 3 3 2 5l2 3h-5c-2 2-6 2-9 1-3-1-5-4-5-7z" fill="#a2a2a2"/>
<path d="M567.400 63v22" stroke="#b4b4b4" stroke-width="1.300"/>
<rect x="573.600" y="60.600" width="27.500" height="26.400" fill="#f7f7f7"/><path d="M574 87V61h27" fill="none" stroke="#a4a4a4" stroke-width="1.200"/>
<rect x="602.200" y="60.600" width="28" height="26.400" fill="#f7f7f7"/><path d="M602.700 87V61h27.500" fill="none" stroke="#a4a4a4" stroke-width="1.200"/>
<path d="M583 67h6M583 70h4M583 73h3M583 77h5M583 80h6M583 83h7" stroke="#333" stroke-width="1.200" stroke-dasharray="2.500 1"/><path d="M590 66v4M590 78v6h-7" fill="none" stroke="#555" stroke-width="1"/>
<path d="M586.500 74l6-5.500v3h6.500v5h-6.500v3z" fill="#505050" stroke="#000" stroke-width="1.200"/>
<path d="M620 67h6M622 70h4M623 73h3M621 77h5M620 80h6M619 83h7" stroke="#333" stroke-width="1.200" stroke-dasharray="2.500 1"/><path d="M627 66v18h-7" fill="none" stroke="#777" stroke-width="1"/>
<path d="M622 74l-6-5.500v3h-6.500v5h6.500v3z" fill="#505050" stroke="#000" stroke-width="1.200"/>
<path d="M652 77l3 3.500" stroke="#d8a070" stroke-width="2.600" stroke-linecap="round"/><path d="M635 73.500l10-7v3.500h4v7h-4v3.500z" fill="#6c7cc0"/><circle cx="648.500" cy="72" r="5.600" fill="#b4c4e4" fill-opacity=".9" stroke="#8c9cc8" stroke-width="1"/>
<path d="M664.300 63v22" stroke="#b4b4b4" stroke-width="1.300"/>
<path d="M680 74.200h91.500" stroke="#848484" stroke-width="2.800"/><path d="M680 76h91.500" stroke="#fafafa" stroke-width="1"/>
<path d="M772 63.500h12.500V82l-4.500 5.500h-8z" fill="#f2f2f2"/><path d="M772 87.500V63.500h12" fill="none" stroke="#fff" stroke-width="1.200"/><path d="M784.500 63.500V82l-4.500 5.500" fill="none" stroke="#6c6c6c" stroke-width="1.600"/>
</svg>
<!-- app icons -->
<svg class="a" style="left:2px;top:4px" width="20" height="20" viewBox="0 0 25 24" preserveAspectRatio="none"><rect x="7" y="2" width="7" height="13" rx="1" fill="#4a8ad8"/><rect x="8.500" y="3" width="3" height="5" fill="#a8d0f8"/><path d="M3 17h13l2 3H1z" fill="#2c6cc0"/><path d="M1 20h17v1.500H1z" fill="#7ab0ec"/><path d="M13 21L17.500 2h2.500L24 21h-3l-1-5h-3.500l-1 5z" fill="#a030a8"/><path d="M17 13h2.500L18.500 7z" fill="#f3f3f3"/></svg>
<svg class="a" style="left:8.500px;top:30.500px" width="19.500" height="20" viewBox="0 0 25 24" preserveAspectRatio="none"><rect x="7" y="2" width="7" height="13" rx="1" fill="#4a8ad8"/><rect x="8.500" y="3" width="3" height="5" fill="#a8d0f8"/><path d="M3 17h13l2 3H1z" fill="#2c6cc0"/><path d="M1 20h17v1.500H1z" fill="#7ab0ec"/><path d="M13 21L17.500 2h2.500L24 21h-3l-1-5h-3.500l-1 5z" fill="#a030a8"/><path d="M17 13h2.500L18.500 7z" fill="#fff"/></svg>
<span class="t" style="left:29.3px;top:7.4px;font-size:14.54px;font-weight:400;font-style:normal;color:#111;">ArtCAM Pro - Bed_285_1.art - [2D View:0 - Bitmap Layer 1]</span>
<span class="t" style="left:19.2px;top:62.0px;font-size:14.73px;font-weight:700;font-style:normal;color:#111;">Project Information</span>
<span class="t" style="left:19.0px;top:173.5px;font-size:13.35px;font-weight:700;font-style:normal;color:#111;">File</span>
<span class="t" style="left:19.5px;top:297.7px;font-size:14.33px;font-weight:700;font-style:normal;color:#111;">Model</span>
<span class="t" style="left:19.5px;top:377.5px;font-size:14.55px;font-weight:700;font-style:normal;color:#111;">Bitmap Tools</span>
<span class="t" style="left:19.5px;top:507.1px;font-size:14.96px;font-weight:700;font-style:normal;color:#111;">Vector Tools</span>
<span class="t" style="left:19.0px;top:722.3px;font-size:14.78px;font-weight:700;font-style:normal;color:#111;">Position, Combine, Trim Vectors</span>
<span class="t" style="left:19.0px;top:847.4px;font-size:14.61px;font-weight:700;font-style:normal;color:#111;">Relief Tools</span>
<span class="t" style="left:1595.0px;top:58.1px;font-size:15.36px;font-weight:700;font-style:normal;color:#fff;">Vectors</span>
<span class="t" style="left:1595.0px;top:217.6px;font-size:14.65px;font-weight:700;font-style:normal;color:#fff;">Bitmaps</span>
<span class="t" style="left:1595.0px;top:318.9px;font-size:14.58px;font-weight:700;font-style:normal;color:#fff;">Reliefs</span>
<span class="t" style="left:16.3px;top:87.2px;font-size:15.06px;font-weight:700;font-style:normal;color:#111;">Artwork</span>
<span class="t" style="left:148.8px;top:87.5px;font-size:14.69px;font-weight:700;font-style:normal;color:#111;">Relief</span>
<span class="t" style="left:16.3px;top:106.0px;font-size:15.21px;font-weight:400;font-style:normal;color:#222;">X: 1000 mm</span>
<span class="t" style="left:148.8px;top:106.7px;font-size:14.47px;font-weight:400;font-style:normal;color:#222;">Max. Z: 24.999</span>
<span class="t" style="left:16.3px;top:124.7px;font-size:15.31px;font-weight:400;font-style:normal;color:#222;">Y: 300 mm</span>
<span class="t" style="left:148.8px;top:125.6px;font-size:14.24px;font-weight:400;font-style:normal;color:#222;">Min. Z: 0</span>
<span class="t" style="left:16.8px;top:143.8px;font-size:15.10px;font-weight:400;font-style:normal;color:#222;">7302 x 2190 pixels</span>
<span class="t" style="left:16.7px;top:408.8px;font-size:15.03px;font-weight:700;font-style:italic;color:#111;">Brush Diameter:</span>
<span class="t" style="left:142.0px;top:410.2px;font-size:13.30px;font-weight:400;font-style:normal;color:#222;">5</span>
<span class="t" style="left:10.4px;top:1028.5px;font-size:14.27px;font-weight:400;font-style:normal;color:#222;">Assistant</span>
<span class="t" style="left:88.5px;top:1029.3px;font-size:15.25px;font-weight:400;font-style:normal;color:#222;">Toolpaths</span>
<span class="t" style="left:3.2px;top:1061.0px;font-size:15.10px;font-weight:400;font-style:normal;color:#222;">Control contrast of bitmap in 2D view</span>
<span class="t" style="left:1593.8px;top:81.1px;font-size:15.25px;font-weight:400;font-style:normal;color:#111;">Default Sheet</span>
<span class="t" style="left:1622.8px;top:150.3px;font-size:15.01px;font-weight:400;font-style:normal;color:#111;">Default Layer</span>
<span class="t" style="left:1622.3px;top:275.1px;font-size:15.08px;font-weight:400;font-style:normal;color:#111;">Bitmap Layer 1</span>
<span class="t" style="left:1593.8px;top:340.6px;font-size:15.30px;font-weight:400;font-style:normal;color:#111;">Front Relief</span>
<span class="t" style="left:1648.6px;top:409.9px;font-size:15.06px;font-weight:400;font-style:normal;color:#111;">Relief Layer 1</span>
<span class="t" style="left:1591.0px;top:1029.2px;font-size:13.66px;font-weight:400;font-style:normal;color:#222;">Layers</span>
<span class="t" style="left:1650.9px;top:1028.4px;font-size:15.18px;font-weight:400;font-style:normal;color:#222;">Add In</span>
<span class="t" style="left:1493.6px;top:1063.8px;font-size:12.59px;font-weight:400;font-style:normal;color:#222;">X:</span>
<span class="t" style="left:1579.4px;top:1062.8px;font-size:13.83px;font-weight:400;font-style:normal;color:#222;">Y:</span>
<span class="t" style="left:1665.9px;top:1062.8px;font-size:13.84px;font-weight:400;font-style:normal;color:#222;">Z:</span>
<span class="t" style="left:37.4px;top:33.5px;font-size:14.60px;letter-spacing:-0.23px;color:#111"><u style="text-decoration-thickness:1px;text-underline-offset:2px">F</u>ile</span>
<span class="t" style="left:77.5px;top:33.5px;font-size:14.60px;letter-spacing:-0.21px;color:#111"><u style="text-decoration-thickness:1px;text-underline-offset:2px">E</u>dit</span>
<span class="t" style="left:120.2px;top:33.5px;font-size:14.60px;letter-spacing:0.53px;color:#111"><u style="text-decoration-thickness:1px;text-underline-offset:2px">M</u>odel</span>
<span class="t" style="left:180.3px;top:33.5px;font-size:14.60px;letter-spacing:-0.23px;color:#111">V<u style="text-decoration-thickness:1px;text-underline-offset:2px">e</u>ctors</span>
<span class="t" style="left:244.8px;top:33.5px;font-size:14.60px;letter-spacing:0.19px;color:#111"><u style="text-decoration-thickness:1px;text-underline-offset:2px">B</u>itmaps</span>
<span class="t" style="left:316.3px;top:33.5px;font-size:14.60px;letter-spacing:-0.32px;color:#111"><u style="text-decoration-thickness:1px;text-underline-offset:2px">R</u>eliefs</span>
<span class="t" style="left:376.4px;top:33.5px;font-size:14.60px;letter-spacing:0.22px;color:#111"><u style="text-decoration-thickness:1px;text-underline-offset:2px">T</u>oolpaths</span>
<span class="t" style="left:458.6px;top:33.5px;font-size:14.60px;letter-spacing:0.53px;color:#111"><u style="text-decoration-thickness:1px;text-underline-offset:2px">W</u>indow</span>
<span class="t" style="left:531.4px;top:33.5px;font-size:14.60px;letter-spacing:0.17px;color:#111"><u style="text-decoration-thickness:1px;text-underline-offset:2px">H</u>elp</span>
<svg class="a" style="left:0;top:0" width="340" height="1021" viewBox="0 0 340 1021">
<defs>
<linearGradient id="gYel" x1="0" y1="0" x2="0" y2="1"><stop offset="0" stop-color="#fbf24a"/><stop offset="1" stop-color="#d8c40c"/></linearGradient>
<linearGradient id="gScr" x1="0" y1="0" x2="1" y2="1"><stop offset="0" stop-color="#3c9ae8"/><stop offset="1" stop-color="#d4ecff"/></linearGradient>
<linearGradient id="gLab" x1="0" y1="0" x2="0" y2="1"><stop offset="0" stop-color="#fdfdfd"/><stop offset="1" stop-color="#b8bcc8"/></linearGradient>
<radialGradient id="gDome" cx=".5" cy=".35" r=".7"><stop offset="0" stop-color="#b8b8ff"/><stop offset="1" stop-color="#5c5cd0"/></radialGradient>
<linearGradient id="gLav" x1="0" y1="0" x2="1" y2="1"><stop offset="0" stop-color="#d0d0fa"/><stop offset="1" stop-color="#8c8ce0"/></linearGradient>
<radialGradient id="gGoldR" cx=".4" cy=".3" r=".8"><stop offset="0" stop-color="#fff0a8"/><stop offset=".5" stop-color="#ecc450"/><stop offset="1" stop-color="#b88420"/></radialGradient>
<linearGradient id="gABC" x1="0" y1="0" x2="1" y2="1"><stop offset="0" stop-color="#0c300c"/><stop offset=".5" stop-color="#58b058"/><stop offset="1" stop-color="#b8ecb8"/></linearGradient>
<linearGradient id="gRelSq" x1="0" y1="0" x2="1" y2="1"><stop offset="0" stop-color="#5c6498"/><stop offset=".5" stop-color="#a8b0d4"/><stop offset="1" stop-color="#6c74a4"/></linearGradient>
<linearGradient id="gBucket" x1="0" y1="0" x2="1" y2="0"><stop offset="0" stop-color="#7aa0a0"/><stop offset=".5" stop-color="#d4e4e4"/><stop offset="1" stop-color="#88a4a4"/></linearGradient>
</defs>
<path d="M33 230.500l21.500-1-5-6.500-9 0z" fill="#a4a4a8" opacity=".75"/><path d="M28.500 203h12l7.500 7.500V229h-19.500z" fill="url(#gPage)"/><path d="M40.500 203v7.500H48z" fill="#f2f5fa"/>
<path d="M82 231l28-4.500 1-5-26 3z" fill="#a8a89c" opacity=".7"/><path d="M77 207l6-3.500 10 .5 3 3 9-.5 1.500 8-28 5z" fill="#f2e414"/><path d="M76 216.500l29.500-6 4 11.500-29 7.500z" fill="url(#gYel)"/><path d="M76 216.500l29.500-6 .5 1.500-29.500 6z" fill="#fdf98a"/>
<path d="M155.500 230l7-8.500h-7z" fill="#a0a4ac" opacity=".75"/><path d="M130.500 204h25v25.500h-22.500l-2.500-2.500z" fill="#1d59c8"/><rect x="135" y="204" width="16" height="13.500" fill="url(#gLab)"/><rect x="136.500" y="221" width="14" height="8.500" fill="#c4cce0"/><rect x="138.500" y="222" width="4.500" height="7.500" fill="#1d59c8"/><path d="M130.500 204h2v25.500h-2zM153.500 204h2v25.500h-2z" fill="#1648a8"/>
<ellipse cx="191" cy="230" rx="10" ry="4" fill="#d4d4ec"/><ellipse cx="191" cy="229" rx="7" ry="2.500" fill="#ececfa"/><path d="M188 222l6 0 1 7-8 0z" fill="#b8b8e0"/><path d="M182.500 203.500l16.500-3.500 2.500 22-16.500 4z" fill="url(#gScr)" stroke="#8fa0c8" stroke-width=".8"/><path d="M187 213l4 6.500 6-14.500" fill="none" stroke="#7c1c3c" stroke-width="2.200"/>
<g transform="translate(205.500 219.500)" fill="#e8a21c"><rect x="-2" y="-9.500" width="4" height="5" transform="rotate(0)"/><rect x="-2" y="-9.500" width="4" height="5" transform="rotate(45)"/><rect x="-2" y="-9.500" width="4" height="5" transform="rotate(90)"/><rect x="-2" y="-9.500" width="4" height="5" transform="rotate(135)"/><rect x="-2" y="-9.500" width="4" height="5" transform="rotate(180)"/><rect x="-2" y="-9.500" width="4" height="5" transform="rotate(225)"/><rect x="-2" y="-9.500" width="4" height="5" transform="rotate(270)"/><rect x="-2" y="-9.500" width="4" height="5" transform="rotate(315)"/><circle r="6.500"/><circle r="2.500" fill="#b86c08"/></g><path d="M205 209.500l1.500 0 .3 6-2 0z" fill="#203080"/>
<path d="M49.500 271.500C57 259 45 251.500 34.500 258" fill="none" stroke="#8c8c8c" stroke-width="4.600"/><path d="M26.500 256.500l14.500-.5-6.500 12.500z" fill="#8c8c8c"/><path d="M27 272.500h13M44 272.500h9" stroke="#cfcfcf" stroke-width="1.600"/>
<g transform="translate(133.400 0) scale(-1 1)"><path d="M49.500 271.500C57 259 45 251.500 34.500 258" fill="none" stroke="#8c8c8c" stroke-width="4.600"/><path d="M26.500 256.500l14.500-.5-6.500 12.500z" fill="#8c8c8c"/><path d="M27 272.500h13M44 272.500h9" stroke="#cfcfcf" stroke-width="1.600"/></g>
<g fill="#ececec" stroke="#b4b4b4" stroke-width="1.100"><path d="M140 249.500l9.500 19.500M153 249.500l-10 19.500"/><ellipse cx="139" cy="272.500" rx="3.200" ry="5" transform="rotate(25 139 272.500)"/><ellipse cx="153" cy="272.500" rx="3.200" ry="5" transform="rotate(-25 153 272.500)"/></g>
<path d="M196 279.500l17-1-4-5z" fill="#c8c8c8" opacity=".7"/><path d="M183 248h10l5.500 5.500V271H183z" fill="#dadada"/><path d="M190 254.500h10.500l6.500 6.500V278.500H190z" fill="#d0d0d0" stroke="#e6e6e6" stroke-width=".8"/><path d="M200.500 254.500v6.500h6.500z" fill="#e8e8e8"/>
<path d="M247 280.500l19-1.500-3-5z" fill="#a8a8a8" opacity=".7"/><rect x="237" y="249" width="21.500" height="29.500" rx="1.500" fill="#c43a1e"/><path d="M237 249h4v29.500h-4z" fill="#a82c14"/><path d="M243 245.500h9.500v3l-2.500 3.500h-4.500l-2.500-3.500z" fill="#b4b4bc"/><path d="M247 259h12l5 5v15.500h-17z" fill="#e2b27c"/><path d="M249.500 265h11M249.500 268.500h11M249.500 272h11M249.500 275.500h11" stroke="#c48c54" stroke-width="1"/>
<path d="M19.500 333l5.500-8.500h31.500l-2.500 36H19.500z" fill="#e9e9e9" stroke="#a8a8a8" stroke-width=".9"/><path d="M25 325h31v4.500H25zM20 333h4.500v27H20z" fill="#cdcdcd"/><path d="M27 325v3M30 325v2M33 325v3M36 325v2M39 325v3M42 325v2M45 325v3M48 325v2M51 325v3M54 325v2M20 336h3M20 340h2M20 344h3M20 348h2M20 352h3M20 356h2" stroke="#888" stroke-width=".8"/><rect x="24.500" y="329.500" width="29.500" height="29" fill="#fff"/>
<circle cx="33.500" cy="333.500" r="2.400" fill="#d04848"/><circle cx="43.500" cy="333.500" r="2.400" fill="#d04848"/><circle cx="38.500" cy="337.500" r="5.500" fill="#e46a6a"/><ellipse cx="38.500" cy="349.500" rx="9.500" ry="8.500" fill="#c94a4a"/><ellipse cx="38.500" cy="351" rx="5.200" ry="5.500" fill="#f9c6c6"/><circle cx="31.500" cy="356.500" r="3" fill="#ea8080"/><circle cx="45.500" cy="356.500" r="3" fill="#ea8080"/><path d="M46.500 335h4.500M48.700 335v5" stroke="#222" stroke-width="1.500"/>
<path d="M60.8 338.7v9l5.500-4.500z" fill="#111"/>
<path d="M100 358.500l7.500-1 0-7z" fill="#b0b0b0"/><rect x="77.500" y="327.500" width="27.500" height="30" fill="#000"/><circle cx="85" cy="332.500" r="2.400" fill="#9a9a9a"/><circle cx="95" cy="332.500" r="2.400" fill="#9a9a9a"/><circle cx="90" cy="336" r="5.500" fill="#b4b4b4"/><path d="M80 352c1-8 4-12 10-12s9 4 10 12c-2 3-5 4-10 4s-8-1-10-4z" fill="#e0e0e0"/><ellipse cx="90" cy="349" rx="5" ry="5.500" fill="#7c7c7c"/><path d="M98 334.500h5M100.500 334.500v5.500" stroke="#fff" stroke-width="1.500"/>
<ellipse cx="154" cy="351.500" rx="9" ry="3" fill="#fffff4"/><ellipse cx="132" cy="351.500" rx="7.500" ry="2.600" fill="#8c8c8c" opacity=".8"/><ellipse cx="141" cy="349.500" rx="9.500" ry="3.600" fill="#d61010"/><ellipse cx="141" cy="348.500" rx="5" ry="1.800" fill="#f04040"/><path d="M141 348l-4.500-11.500 6-6" fill="none" stroke="#b80c0c" stroke-width="2.200"/><path d="M138 327l9-2 8 3-8.500 13-7.500-7z" fill="#e11c1c"/><path d="M147 325l8 3-2 3z" fill="#f46060"/>
<rect x="179" y="324" width="26" height="30.500" fill="#5c5a28"/><path d="M179 324h26v12h-26z" fill="#a4a468"/><path d="M184 354.500c-1-14 2-26 8-26s9 12 8 26z" fill="#24160a"/><ellipse cx="192" cy="334" rx="3.800" ry="5.200" fill="#ecc47c"/><path d="M188 341.500h8l1.500 7h-11z" fill="#dcae60"/><path d="M185 350h12v4.500h-12z" fill="#3a2812"/><path d="M189 350.500l17-8 8 3.500-17.500 8.500z" fill="#fbb048"/><path d="M189 350.500l7.500 4 0 6.500-7.500-5z" fill="#c8680c"/><path d="M196.500 354.500l17.500-8.500v6l-17.500 9z" fill="#e8861c"/>
<rect x="16.500" y="433" width="239" height="2.200" fill="#8e8e8e"/><rect x="16.500" y="435.200" width="239" height="3" fill="#fff"/><rect x="25.500" y="425.500" width="11.500" height="19" fill="url(#gLab)" stroke="#111" stroke-width="1.400"/>
<path d="M280 420.500l3.500 4-3.500 4-3.500-4z" fill="#2c54a4"/>
<path d="M32 484l21.500-8.500" stroke="#a8a8a8" stroke-width="2.200"/><path d="M44.500 463.500L33.500 480.500" stroke="#e01c1c" stroke-width="3.800"/><path d="M43.500 463L32.500 480" stroke="#f88" stroke-width="1"/><path d="M33.500 480.500l-2 3.500" stroke="#444" stroke-width="2"/>
<path d="M61.0 468.5v9l5.500-4.500z" fill="#111"/>
<path d="M99 476c5 0 8 3 8 6s-6 4-10 2" fill="none" stroke="#a8a8a8" stroke-width="1.400"/><path d="M85 470.500l16-4.500 4.500 16.500-15 5z" fill="url(#gBucket)"/><ellipse cx="93" cy="468.500" rx="8.300" ry="2.800" transform="rotate(-15 93 468.500)" fill="#5c7c7c"/><path d="M79 478.500c-1.500-9 4-16 14-15.500 3 .2 5 2 5.500 5-7-1-11 5-12 11.500-.3 3-1.500 5-3.500 5.500-2-.5-3.500-3-4-6.500z" fill="#e2301c"/><path d="M82 470c2-4 6-6 10-5.500" stroke="#f88" stroke-width="1.200" fill="none"/>
<path d="M113.5 468.5v9l5.500-4.500z" fill="#111"/>
<ellipse cx="152" cy="480.500" rx="6.500" ry="1.600" fill="#a8a8a8"/><path d="M146 467.500L137.500 481" stroke="#d8dcec" stroke-width="3.800"/><path d="M140.500 476L136.500 482.500" stroke="#2434c4" stroke-width="2.600"/><path d="M136.500 482.500l-1 2" stroke="#666" stroke-width="1.200"/><path d="M142 468l8.500 4" stroke="#3a3a3a" stroke-width="2.200"/><circle cx="148.500" cy="463.500" r="3.900" fill="#8e1c3c"/><circle cx="147.500" cy="462.500" r="1.300" fill="#d06080"/>
<path d="M186 486l24-1 3-4z" fill="#b0b0b0" opacity=".7"/><path d="M179.500 472.500c-.5-10 10.500-13.500 17-7.500 3.500 3.500 6.500-2.500 12.500.5 5.500 4 1 17.500-13 19-10 .8-16-4-16.500-12z" fill="#7a4c3a"/><path d="M181 470c1-6 8-8 13-4" stroke="#a07864" stroke-width="1.200" fill="none"/><ellipse cx="190.500" cy="469" rx="2.800" ry="2" fill="#ececec"/><circle cx="184.500" cy="476" r="2.100" fill="#e01818"/><circle cx="189.500" cy="479.500" r="2.100" fill="#f0d010"/><circle cx="194.500" cy="480" r="2.100" fill="#b8d818"/><circle cx="199.500" cy="479" r="2.100" fill="#20a030"/><circle cx="204" cy="476.500" r="2.100" fill="#2848e0"/><circle cx="207.500" cy="473" r="2" fill="#182090"/>
<path d="M218.0 468.5v9l5.500-4.500z" fill="#111"/>
<path d="M238 486l28-2-2-4z" fill="#b4b4b4" opacity=".7"/><path d="M251 463a10.500 10.500 0 1 1 1 21" fill="none" stroke="#3838a8" stroke-width="1.600"/><path d="M231.500 471.500l9.500-10.500 10 2 5 11-8.500 10.500-10.500-1.500z" fill="#f7e81c"/><path d="M241 461l6 23.500M231.500 471.500l24.500 2.500" stroke="#e0c800" stroke-width="1"/><circle cx="251.500" cy="463" r="1.400" fill="#202080"/><circle cx="253" cy="484" r="1.400" fill="#202080"/>
</svg>
<svg class="a" style="left:0;top:0" width="340" height="1021" viewBox="0 0 340 1021">
<rect x="16" y="530" width="42.500" height="44" fill="#fbfbfb"/><path d="M16.500 574V530.500H58.500" fill="none" stroke="#9c9c9c" stroke-width="1.200"/>
<path d="M29 548l18 9-6 2 8 10-4 2-8-9-3 5z" fill="#b8b8b8" opacity=".7"/><path d="M26 542l19 9.500-6.500 2 8 10-4.200 2.500-8-10-3.300 5.500z" fill="#505050"/>
<path d="M61.0 548.5v9l5.500-4.500z" fill="#111"/>
<g fill="none" stroke="#4c4c4c" stroke-width="3"><path d="M103.6 558.0A14.500 14.500 0 0 1 93.8 567.0"/><path d="M85.0 566.6A14.500 14.500 0 0 1 76.0 556.8"/><path d="M76.4 548.0A14.500 14.500 0 0 1 86.2 539.0"/><path d="M95.0 539.4A14.500 14.500 0 0 1 104.0 549.2"/></g><g fill="#4c4c4c"><path d="M0 -4.500L5.500 0 0 4.500z" transform="translate(92.0 567.4) rotate(172)"/><path d="M0 -4.500L5.500 0 0 4.500z" transform="translate(75.6 555.0) rotate(262)"/><path d="M0 -4.500L5.500 0 0 4.500z" transform="translate(88.0 538.6) rotate(352)"/><path d="M0 -4.500L5.500 0 0 4.500z" transform="translate(104.4 551.0) rotate(442)"/><path d="M90 543.500l4 4.500h-2.500v3.500h3.500v-2.500l4.500 4-4.500 4v-2.500h-3.500v3.500h2.500l-4 4.500-4-4.500h2.500v-3.500h-3.500v2.500l-4.500-4 4.500-4v2.500h3.500v-3.500h-2.500z"/><path d="M74 538h7v-1.800l3.500 2.800-3.500 2.800v-1.800h-7zM84 544h-7v1.800l-3.500-2.800 3.500-2.800v1.800h7z" transform="translate(1 -2)"/><path d="M101 569v-7h-1.800l2.800-3.500 2.800 3.500h-1.800v7zM107 560v7h1.800l-2.800 3.500-2.800-3.500h1.800v-7z"/></g>
<path d="M134 568h24.500v-22" fill="none" stroke="#c8c8c8" stroke-width="2"/><rect x="134" y="559.500" width="20" height="4" fill="#d4d4d4"/><rect x="131.700" y="542.300" width="24" height="23" fill="none" stroke="#505050" stroke-width="2.600"/>
<path d="M166.0 548.5v9l5.500-4.500z" fill="#111"/>
<ellipse cx="197.500" cy="560.500" rx="14" ry="2.600" fill="#b4b4b4"/><path d="M184.500 541h26v6.500h-9.500v18.500h-7v-18.500h-9.500z" fill="#f2a21e" stroke="#a8640c" stroke-width=".9"/><g fill="#2222c8"><circle cx="184.500" cy="541" r="1.500"/><circle cx="210.500" cy="541" r="1.500"/><circle cx="184.500" cy="547.500" r="1.500"/><circle cx="210.500" cy="547.500" r="1.500"/><circle cx="194" cy="547.500" r="1.300"/><circle cx="201" cy="547.500" r="1.300"/><circle cx="194" cy="566" r="1.500"/><circle cx="201" cy="566" r="1.500"/><circle cx="191" cy="566.500" r="1.200"/><circle cx="204" cy="566.500" r="1.200"/></g>
<path d="M230 553l10-10 10 10-10 10z" fill="none" stroke="#c4c4c4" stroke-width="1.500"/><ellipse cx="252" cy="552" rx="10" ry="8" fill="#cfcfcf"/><ellipse cx="250" cy="549" rx="5" ry="4" fill="#e4e4e4"/><path d="M236 564l26-2 2-4z" fill="#d0d0d0"/>
<path d="M271.3 548.5v9l5.500-4.500z" fill="#111"/>
<path d="M44 611l14-1-2-5z" fill="#b0b0b0" opacity=".7"/><path d="M40 603l16.500 5-1 3.500L38 607z" fill="#f6e45c"/><path d="M55 607.500l2.500.5-.5 3.500-2.500-.5z" fill="#9c9c9c"/><rect x="21" y="586.500" width="23.500" height="22" rx="5" fill="#f0b42c"/><path d="M21 600c0 6 3 8.500 8 8.500h10c4 0 5.500-2 5.500-6z" fill="#d48c14"/><circle cx="31.500" cy="597" r="8" fill="#2a3aa6"/><path d="M23.500 597a8 8 0 0 0 16 0z" fill="#e8e8f0"/><circle cx="31.500" cy="597" r="1.800" fill="#c0c0d0"/>
<rect x="75.300" y="583" width="30.500" height="30" rx="2" fill="#0f9016" stroke="#9ce49c" stroke-width="1.600"/><path d="M86 588h9v7h7v9h-7v7h-9v-7h-7v-9h7z" fill="none" stroke="#c8ffc8" stroke-width="1.800"/>
<rect x="126" y="580.500" width="36.500" height="36" fill="url(#gABC)"/><rect x="128.500" y="583" width="30" height="15.500" fill="#9cdc9c" fill-opacity=".75"/><rect x="128.500" y="600.500" width="30" height="15.500" fill="#9cdc9c" fill-opacity=".6"/><rect x="160" y="583" width="2.500" height="33" fill="#b8ecb8" fill-opacity=".7"/>
<g fill="#103810"><circle cx="132" cy="586.500" r="2.300"/><rect x="138.500" y="584" width="3.600" height="5"/><path d="M145 589.500l5.500-6 5.500 6z"/><circle cx="132" cy="604" r="2.300" fill-opacity=".7"/><rect x="138.500" y="601.500" width="3.600" height="5" fill-opacity=".7"/><path d="M145 607l5.500-6 5.500 6z" fill-opacity=".7"/></g>
<text x="129" y="597.800" font-size="9" font-family="Liberation Sans,sans-serif" fill="#144414" textLength="28" lengthAdjust="spacingAndGlyphs">ABC</text><text x="129" y="615.800" font-size="9" font-family="Liberation Sans,sans-serif" fill="#2c6c2c" fill-opacity=".6" textLength="28" lengthAdjust="spacingAndGlyphs">ABC</text>
<path d="M180 582q17 5 34 0-6 16 0 32-17-5-34 0 6-16 0-32z" fill="#ebebeb" stroke="#8e8e8e" stroke-width="1.600"/><g fill="none" stroke="#a8a8a8" stroke-width="1.100"><path d="M188.500 584q3 14 0 28M197 585v26M205.500 584q-3 14 0 28M183 590q14 3 28 0M184 598h26M183 606q14-3 28 0"/><ellipse cx="197" cy="598" rx="8" ry="10" stroke="#9a9a9a" stroke-width="1.600"/></g>
<g fill="none" stroke="#a4a4a4" stroke-width="2"><rect x="231" y="601.500" width="5.500" height="5.500"/><rect x="240" y="601.500" width="5.500" height="5.500"/><rect x="240" y="610.500" width="5.500" height="5.500"/><circle cx="247.500" cy="587.500" r="2.800"/><circle cx="262.500" cy="587.500" r="2.800"/><circle cx="247.500" cy="596.500" r="2.800"/><circle cx="262.500" cy="596.500" r="2.800"/><circle cx="255" cy="602" r="2.800"/></g><circle cx="255" cy="592" r="1" fill="#a4a4a4"/>
<rect x="24" y="627" width="4" height="4" fill="#fff" stroke="#111" stroke-width="1.300"/><path d="M27 652l7-9.500 8 5.500 4 5.500 6-5.500" fill="none" stroke="#333" stroke-width="2"/><g fill="#eef07c" stroke="#9a9c30" stroke-width=".7"><circle cx="27" cy="652" r="3.700"/><circle cx="34.200" cy="642.800" r="3.700"/><circle cx="42" cy="648.200" r="3.700"/><circle cx="52" cy="648" r="3.700"/></g><g fill="#222"><circle cx="27" cy="652" r="1.100"/><circle cx="34.200" cy="642.800" r="1.100"/><circle cx="42" cy="648.200" r="1.100"/><circle cx="52" cy="648" r="1.100"/></g><path d="M42.500 650.500l3.500 4 3.500-3" fill="none" stroke="#222" stroke-width="2.200"/>
<g fill="none" stroke="#b4b4b4" stroke-width="1.500"><path d="M76 641.500l9.500-9h6l4.500 10 9-8.500"/><path d="M88 634v7M86 639l2 3 2-3" stroke-width="1.200"/></g><g fill="none" stroke="#d0d0d0" stroke-width="1" stroke-dasharray="2 1.500"><path d="M76 655q8-10 14-6t16-2M78 658q10-8 14-3t12 0M84 646q6 4 14 0"/></g>
<path d="M127 626q15 16.500 0 32.500" fill="none" stroke="#929292" stroke-width="2.600"/><path d="M128 626l15 3M128 658.500l15-3.500M142 642h10" fill="none" stroke="#9a9a9a" stroke-width="1.200"/><path d="M150.500 639.500l3.500 2.500-3.500 2.500z" fill="#9a9a9a"/><g fill="#a0a0a0"><rect x="125" y="624" width="4" height="4"/><rect x="125" y="656.500" width="4" height="4"/><rect x="142" y="627.500" width="3.600" height="3.600"/><rect x="142" y="653" width="3.600" height="3.600"/><rect x="148.500" y="623.500" width="3.600" height="3.600"/><rect x="148.500" y="656.500" width="3.600" height="3.600"/></g><rect x="158" y="640" width="3.500" height="3.500" fill="none" stroke="#b0b0b0" stroke-width="1"/><path d="M153 628q9 14 0 28" fill="none" stroke="#dcdcdc" stroke-width="1" stroke-dasharray="2 2"/>
<path d="M179 626l33.500 15.500L179 658" fill="none" stroke="#5a5a5a" stroke-width="2.600"/><path d="M179 626l9 4.200M179 658l9-4.500" stroke="#000" stroke-width="3.600"/><path d="M188 629.500q15 12 0 24.500" fill="none" stroke="#f4f48c" stroke-width="3"/>
<path d="M243 649l16-16" stroke="#f4f49c" stroke-width="4.500"/><path d="M251.500 624.500l14 11M266.500 624l-9 12.500M231 647.500l14 11M245 646l-9 13" stroke="#000" stroke-width="3.800"/><g fill="none" stroke="#000" stroke-width="2"><circle cx="259.500" cy="645" r="3"/><circle cx="255.500" cy="652.500" r="3"/></g><path d="M245.500 639l11 5.500-1.500 2.500-11-4.500zM243 645l11 .5v2.500l-11-.5z" fill="#fff" stroke="#000" stroke-width="1"/>
<ellipse cx="39" cy="700.500" rx="18" ry="5" fill="#8c8c8c" opacity=".8"/><path d="M24 679c-4 10-2 19 15 20s19-10 15-20z" fill="url(#gDome)"/><path d="M39 680v19" stroke="#c8c8ff" stroke-width="1.400"/><path d="M26 693c4-6 8-8 13-8s9 2 13 8" fill="none" stroke="#dcd85c" stroke-width="1.500"/><path d="M27 684l4 8M51 684l-4 8" stroke="#e8e8ff" stroke-width="1.200"/><ellipse cx="39" cy="678.500" rx="14.800" ry="4.600" fill="#c8c8e4" fill-opacity=".7" stroke="#3c3c3c" stroke-width="1.600"/>
<g fill="none" stroke="#a8a8a8" stroke-width="1.800"><path d="M75 692q9-8 13-20"/></g><g fill="none" stroke="#b8b8b8" stroke-width="1.200"><path d="M88 671h13M86 683l8 5M74 694l4 8"/></g><g fill="#b0b0b0"><path d="M100 668.500l4 2.500-4 2.500zM92 685l4 4-5 .5zM75.500 700l3.500 3.500-4.500.5z"/><circle cx="88" cy="671" r="1.500"/><circle cx="74.500" cy="693" r="1.500"/></g>
<path d="M142 672.500v32.500" stroke="#7c7c7c" stroke-width="1.300" stroke-dasharray="6 2 1.500 2"/><path d="M139.500 676c-8 1-6 9-6.500 13-3 4 1 6-1 9-1 2-1.500 4-1.500 6h9" fill="none" stroke="#747474" stroke-width="1.300"/><path d="M134 703q3-8 6-9" fill="none" stroke="#909090" stroke-width="1"/><path d="M145 690c6-1 9 3 8 8" fill="none" stroke="#dcdcdc" stroke-width="1.200" stroke-dasharray="2 2"/>
<path d="M184 706l30-4-1-4z" fill="#b0b0a8" opacity=".6"/><path d="M178 686l12-9.500 3 17.500 21-3-2.500 10-29.500 4.500z" fill="#ecd40c"/><path d="M178 686l12-9.500 1.500 8z" fill="#fbf45c"/><path d="M182 705.500l29.500-4.500 2.500-10-21 3z" fill="#c8ac04"/><path d="M193 694l21-3-1 3.500-20 3z" fill="#f6e63c"/><path d="M199.500 671.500l2.500 8.500 9.500-1-6.500 6.500 4 8.500-8.500-4.500-7.500 5.500 2.500-9-7-5.500 8.500-.5z" fill="#f8f014" stroke="#2c2c2c" stroke-width="1.800" stroke-linejoin="round"/>
</svg>
<svg class="a" style="left:0;top:0" width="340" height="1021" viewBox="0 0 340 1021">
<path d="M20.300 751.500v32.500" stroke="#8c8c8c" stroke-width="1.300" stroke-dasharray="5 1.500"/><path d="M24 767.500h9" stroke="#9a9a9a" stroke-width="2"/><path d="M27.500 764l-4 3.500 4 3.500z" fill="#9a9a9a"/><path d="M38 777.500h14.500v-14" fill="none" stroke="#d0d0d0" stroke-width="2"/><rect x="36" y="761" width="13.500" height="13.500" fill="#ececec" stroke="#909090" stroke-width="2"/><rect x="38" y="770" width="10" height="3" fill="#d8d8d8"/>
<path d="M61.0 763.9v9l5.500-4.500z" fill="#111"/>
<ellipse cx="92.500" cy="779.500" rx="15" ry="3" fill="#c8d0d0" opacity=".8"/>
<g font-family="Liberation Sans,sans-serif" font-size="7.400" font-weight="700" fill="#111" stroke="#111" stroke-width=".25"><text transform="translate(80.9 771.7) rotate(-110)" text-anchor="middle" y="0">T</text><text transform="translate(80.2 767.0) rotate(-88)" text-anchor="middle" y="0">e</text><text transform="translate(81.4 762.3) rotate(-65)" text-anchor="middle" y="0">x</text><text transform="translate(84.2 758.4) rotate(-42)" text-anchor="middle" y="0">t</text><text transform="translate(93.0 755.2) rotate(2)" text-anchor="middle" y="0">o</text><text transform="translate(97.7 756.4) rotate(25)" text-anchor="middle" y="0">n</text><text transform="translate(104.1 763.3) rotate(70)" text-anchor="middle" y="0">a</text><text transform="translate(103.6 772.7) rotate(115)" text-anchor="middle" y="0">C</text><text transform="translate(100.8 776.6) rotate(138)" text-anchor="middle" y="0">u</text><text transform="translate(96.7 779.1) rotate(160)" text-anchor="middle" y="0">r</text><text transform="translate(92.0 779.8) rotate(182)" text-anchor="middle" y="0">v</text><text transform="translate(87.3 778.6) rotate(205)" text-anchor="middle" y="0">e</text></g>
<path d="M88 771.500h9" stroke="#a0a8a8" stroke-width="1"/>
<g font-family="Liberation Sans,sans-serif" font-weight="700" fill="#000" stroke="#000" stroke-width=".5"><text x="127" y="765.200" font-size="15.800" textLength="32.200" lengthAdjust="spacingAndGlyphs">Nes</text><text x="139.800" y="774.400" font-size="15.800" textLength="19.500" lengthAdjust="spacingAndGlyphs">ng</text><text x="128" y="781" font-size="15" textLength="10.500" lengthAdjust="spacingAndGlyphs">ti</text></g>
<path d="M185 782l28.500-1.500 2-5z" fill="#d4d4d4"/><rect x="182" y="757.500" width="26" height="22.500" fill="#e4e4e4" stroke="#a8a8a8" stroke-width="1.300" stroke-dasharray="2 1"/><rect x="187" y="761.500" width="11" height="9.500" fill="none" stroke="#9c9c9c" stroke-width="2"/><rect x="192" y="766" width="13" height="10.500" fill="#dcdcdc" stroke="#9c9c9c" stroke-width="2"/><rect x="200" y="759" width="6" height="5" fill="#c4c4c4"/>
<path d="M218.0 763.9v9l5.500-4.500z" fill="#111"/>
<path d="M236 783l24-2 2-4z" fill="#d4d4d4"/><rect x="232" y="757" width="17.500" height="13.500" fill="#ececec" stroke="#888" stroke-width="1.800"/><circle cx="250" cy="772" r="9" fill="#e2e2e2" stroke="#888" stroke-width="1.800"/><path d="M250 763v9h-9" fill="none" stroke="#b4b4b4" stroke-width="1.200"/>
<path d="M271.3 763.9v9l5.500-4.500z" fill="#111"/>
<path d="M25 805l10-5h12.500l3 4v13l-14 7.500-11.500-6" fill="none" stroke="#bcbcbc" stroke-width="1.800"/><path d="M25 820l12 6 14-3" fill="none" stroke="#dcdcdc" stroke-width="2"/>
<path d="M61.0 808.5v9l5.500-4.500z" fill="#111"/>
<clipPath id="cWv"><rect x="72" y="794" width="38.500" height="38"/></clipPath><g clip-path="url(#cWv)"><path d="M72 796.0q5-5 10 0t10 0 10 0 8-2M72 802.0q5-5 10 0t10 0 10 0 8-2M72 808.0q5-5 10 0t10 0 10 0 8-2M72 814.0q5-5 10 0t10 0 10 0 8-2M72 820.0q5-5 10 0t10 0 10 0 8-2M72 826.0q5-5 10 0t10 0 10 0 8-2M72 832.0q5-5 10 0t10 0 10 0 8-2" fill="none" stroke="#3c3c3c" stroke-width="2"/>
<path d="M93.1 801.1L95.3 808.5L102.8 810.5L96.4 814.9L96.9 822.7L90.7 817.9L83.5 820.8L86.1 813.5L81.2 807.5L88.9 807.6z" fill="#fff" stroke="#d42424" stroke-width="2"/></g>
<g fill="none" stroke="#b4b4b4" stroke-width="1.500"><path d="M141 796c-14 6-12 28 2 33M149 797c14 6 12 27-3 33M137 802c8-8 20-4 22 8M152 826c-8 6-20 2-22-10"/><path d="M143 795c6 10 0 22 8 32" stroke-width="2.500" stroke="#c4c4c4"/><path d="M131 826l6 3M158 823l-4 6" stroke="#c8c8c8"/></g>
<path d="M20 880l3-3h6l2 2h6l-2 6H20z" fill="#189088"/><path d="M22 882h16l-3 4H20z" fill="#58d0c8"/><path d="M33 878c2-2 5-1 5 2" fill="none" stroke="#222" stroke-width="1.300"/><path d="M36.500 880.500l2 2.500 1.500-3z" fill="#222"/>
<ellipse cx="40" cy="905" rx="14" ry="3" fill="#b0b0b0" opacity=".6"/><path d="M20 899c0-7 8-11 14-7 2-4 8-5 12-2 3-3 7-1 7 3 3 2 3 6-1 7-3 0-4-1-5-3-2 4-6 8-12 9-8 1-15-1-15-7z" fill="url(#gGoldR)"/><ellipse cx="29" cy="898" rx="5" ry="4" fill="#f8e08c" fill-opacity=".7"/><ellipse cx="41" cy="902" rx="4" ry="3" fill="#c89430" fill-opacity=".6"/>
<path d="M61.0 887.5v9l5.500-4.500z" fill="#111"/>
<path d="M78 884l8-2.500 21 13-3.500 9-7 1.500-24-15.500z" fill="#b89838"/><path d="M72.500 889.500l12-7.500 22.500 12.500-10.500 8.500z" fill="#ecd888"/><path d="M72.500 889.500l24 13.500v2.500l-24-14z" fill="#cca840"/><path d="M96.500 903l10.500-8.500v2.500l-10.500 8.500z" fill="#a88428"/>
<path d="M113.5 887.5v9l5.500-4.500z" fill="#111"/>
<ellipse cx="144" cy="907" rx="14" ry="2.500" fill="#b8b8b8" opacity=".7"/><path d="M130 903c8-2 10-8 14-14 4 6 6 12 14 14-4 4-24 4-28 0z" fill="url(#gGoldR)"/><path d="M130 886c4-2 6-7 10-7 3-3 8-2 9 1 4 0 8 4 9 6-8 4-20 4-28 0z" fill="url(#gGoldR)"/><path d="M144 889v9" stroke="#222" stroke-width="1"/><path d="M142 896.500l2 3.500 2-3.500z" fill="#222"/>
<ellipse cx="198" cy="907" rx="12" ry="2.500" fill="#b8b8b8" opacity=".7"/><ellipse cx="197.500" cy="882.500" rx="11.500" ry="7" fill="url(#gGoldR)"/><path d="M185.500 901c0-6 5-10 12-10s13 4 13 10c0 5-5 8-12.500 8s-12.500-3-12.500-8z" fill="#e4ac58"/><path d="M189 898l5 6M194 895l5 8M201 895l4 7" stroke="#f8d8a0" stroke-width="1.500"/><path d="M197.500 889v7" stroke="#222" stroke-width="1"/><path d="M195.500 894.500l2 3.500 2-3.500z" fill="#222"/>
<ellipse cx="250" cy="908" rx="14" ry="2.500" fill="#b8b8b8" opacity=".7"/><path d="M235 903c0-5 6-8 11-6 3-3 8-3 11 0 4-1 7 2 6 5-1 4-6 4-9 6-6 2-19 1-19-5z" fill="#ece0bc"/><path d="M234.500 884c0-6 7-9 12-6 2-4 8-5 11-2 3-3 7 0 6 3 2 3 0 6-3 6-2 4-8 7-13 6-7 0-13-2-13-7z" fill="url(#gGoldR)"/><path d="M249 890v9" stroke="#222" stroke-width="1.200"/><path d="M247 892.500l2-3.500 2 3.500z" fill="#222"/>
<text x="24" y="953" font-family="Liberation Serif,serif" font-style="italic" font-size="40" fill="#dedede" stroke="#c8c8c8" stroke-width=".8" textLength="28" lengthAdjust="spacingAndGlyphs">S</text>
<g fill="none" stroke="#d0d0d0" stroke-width="1.800"><ellipse cx="93" cy="938" rx="18" ry="16"/><ellipse cx="86" cy="932" rx="9" ry="8"/><ellipse cx="100" cy="932" rx="9" ry="8"/><ellipse cx="86" cy="944" rx="9" ry="8"/><ellipse cx="100" cy="944" rx="9" ry="8"/><path d="M82 926l22 24M104 926l-22 24M93 922v32M75 938h36"/></g>
<path d="M137 924l5-3.500 9 4.500 0 4.500-6 2.500-8.500-4z" fill="#f0d040"/><path d="M141 923v5l5 1.500" fill="none" stroke="#a88010" stroke-width="1.300"/><ellipse cx="143" cy="952.500" rx="13" ry="2" fill="#b8b8b8" opacity=".7"/><path d="M129.500 942l14-6.500 12.500 7-14 7.500z" fill="#3c4880"/><path d="M129.500 942l12.500 8v4.500l-12.500-8zM142 950l14-7.500v4.500l-14 7.500z" fill="#262e5c"/><path d="M138 939.500v6.500l5 2.500 4.500-2-4.500-2.500-4.500 1.500" fill="none" stroke="#f0d040" stroke-width="1.800"/>
<path d="M166.0 933.5v9l5.500-4.500z" fill="#111"/>
<ellipse cx="196" cy="953" rx="12" ry="2" fill="#b8b8b8" opacity=".7"/><path d="M183.500 927.500l11.500-6 11.500 6-11.500 6.500z" fill="#f6d838"/><path d="M183.500 927.500l11.500 6.500v2.500l-11.500-6.500zM195 934l11.500-6.500v2.500l-11.500 6.500z" fill="#c8a010"/><ellipse cx="195" cy="926.500" rx="3.500" ry="1.800" fill="#e02810"/><path d="M183.500 944l11.500-6 11.500 6-11.500 7z" fill="#f6d838"/><path d="M183.500 944l11.500 7v3l-11.500-7zM195 951l11.500-7v3l-11.500 7z" fill="#c8a010"/><ellipse cx="195" cy="944.500" rx="3.500" ry="2" fill="#701008"/><path d="M195 935v5" stroke="#222" stroke-width="1.200"/>
<path d="M218.0 933.5v9l5.500-4.500z" fill="#111"/>
<path d="M232 924h33l2.500 27.500h-37z" fill="url(#gLav)"/><path d="M230.500 951.500h37v3.500h-37z" fill="#7c7cd4"/><path d="M249 930v21" stroke="#e8e8ff" stroke-width="2"/><path d="M237 937c0-16 22-18 24-2" fill="none" stroke="#f4e428" stroke-width="4"/><path d="M255.500 934.500l11 .5-6 8z" fill="#f4e428"/><path d="M234.500 936h5v4h-5z" fill="#f4e428"/>
<ellipse cx="39" cy="996.500" rx="16" ry="3" fill="#909090" opacity=".7"/><path d="M38.5 965.9L43.8 976.1L55.6 977.7L47.1 985.6L49.1 996.8L38.5 991.5L27.9 996.8L29.9 985.6L21.4 977.7L33.2 976.1z" fill="#7c7cd8" stroke="#7070cc" stroke-width="1.500" stroke-linejoin="round"/><path d="M38.500 965l5.500 11-5.500 8-5.500-8z" fill="#9c9cec"/><path d="M38.500 984l-11 13.500 11-5 11 5z" fill="#6060b8"/><circle cx="38.500" cy="979" r="5.200" fill="#c4c4f8"/>
<path d="M73 978v-4h9c0-12 18-12 18 0h9v4" fill="none" stroke="#222" stroke-width="1.400"/><ellipse cx="91" cy="997" rx="16" ry="2.500" fill="#b0b0b0" opacity=".6"/><path d="M76 984l17-7c5-2 12 2 14 8l-17 8c-6 2-12-2-14-9z" fill="#b4b4ec"/><path d="M76 984c3-3 9-2 13 1s5 6 1 8c-6 2-12-2-14-9z" fill="#d4d4fa"/><path d="M74 989l22 10 3-3-22-10z" fill="#c8c8f4"/><path d="M84 992c0-8 6-14 14-12" fill="none" stroke="#e03030" stroke-width="1.600"/>
<path d="M126 979c6-8 20-8 28 0 5 5 6 10 6 14l-8 3c-1-6-4-11-10-14-5-2-11-2-16 1z" fill="#d8604c"/><path d="M126 979l4 4c4-3 9-3 13-1l-1-4c-5-3-11-3-16 1z" fill="#f4e4a4"/><path d="M142 982c6 3 9 8 10 14l-6-4c-2-4-3-6-8-8z" fill="#f0d890"/><path d="M134 975l6 8M144 975l2 8M152 979l-2 9" stroke="#b84434" stroke-width="1"/>
<path d="M166.0 978.0v9l5.500-4.500z" fill="#111"/>
<path d="M206 999.500l7-1 0-8z" fill="#a0a0a0"/><rect x="179.500" y="966.500" width="32" height="32" fill="url(#gRelSq)"/><path d="M186 992c-2-10 2-20 10-22 6 2 10 10 10 16 2 3 1 6-2 7-6 2-14 2-18-1z" fill="#c8cce8" fill-opacity=".8"/><ellipse cx="196" cy="979" rx="4" ry="5" fill="#e4e8f8" fill-opacity=".8"/><path d="M188 988c4 4 12 4 16 0" stroke="#8890b8" stroke-width="1" fill="none"/>
<path d="M236 998l28-3 2-4z" fill="#b0b0b0" opacity=".6"/><path d="M231 986l20-8 16 7-22 10z" fill="#c4c4f0"/><path d="M231 986l14 9v2l-14-9zM245 995l22-10v2l-22 10z" fill="#9c9cd8"/><path d="M237 974l14-6 10 7 2 12-14 4-10-6z" fill="#f0e040"/><path d="M237 974l14-6 10 7-13 5z" fill="#f8ec60"/>
<path d="M23 1021c4-4 8-7 14-7 3-3 8-2 10 1 3 2 5 4 5 6z" fill="#c81818"/><path d="M37 1014c3-3 8-2 10 1l-4 2z" fill="#e84040"/>
<path d="M75 1011h34l-4 10h-26z" fill="#e4e4e4" stroke="#8c8c8c" stroke-width="1.500"/><path d="M84 1011v10M93 1011v10M101 1011v10M77 1016h31" stroke="#b4b4b4" stroke-width="1.200"/><ellipse cx="90" cy="1019" rx="7" ry="3" fill="#bcbcbc"/>
<path d="M131 1021c2-8 10-12 16-12s14 5 16 12z" fill="url(#gDome)"/>
<path d="M178 1021c0-6 7-11 16-11s16 5 16 11z" fill="#3c88d8"/><path d="M182 1021l12-11 12 11M186 1014h16M194 1010v11M188 1021l6-7 6 7" stroke="#b8e0ff" stroke-width=".9" fill="none"/>
<path d="M230 1021c1-5 6-9 12-9s11 3 13 9z" fill="#f0dc28"/><path d="M238 1021l6-9 3 5 6-6 1 10z" fill="#3c80d0"/>
</svg>
</body></html>
